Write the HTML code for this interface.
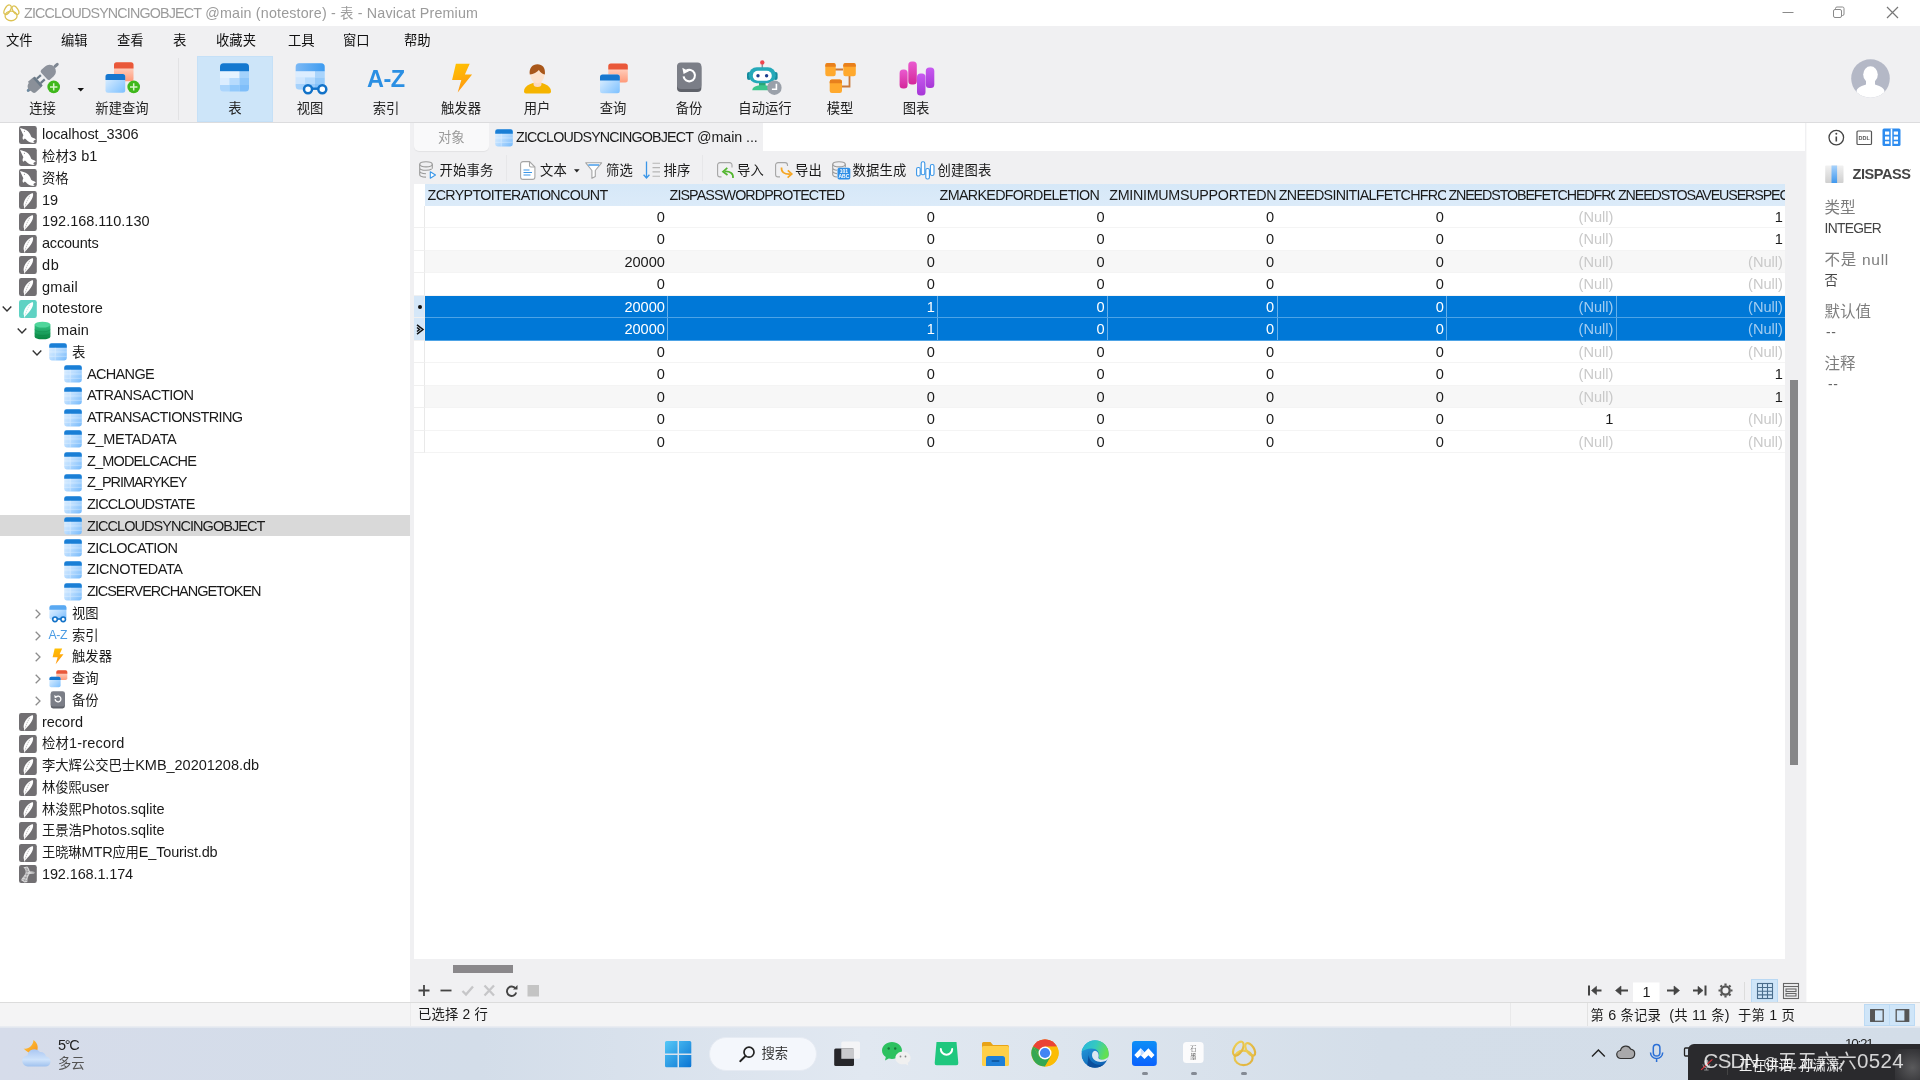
<!DOCTYPE html>
<html lang="zh-CN"><head>
<meta charset="utf-8">
<title>ZICCLOUDSYNCINGOBJECT @main (notestore) - 表 - Navicat Premium</title>
<style>
*{box-sizing:border-box;margin:0;padding:0}
html,body{width:1920px;height:1080px;overflow:hidden;background:#f0f0f2}
body{position:relative;font-family:"Liberation Sans","Noto Sans CJK SC",sans-serif;font-size:14px;color:#1a1a1a;-webkit-font-smoothing:antialiased}
#wrap{position:absolute;left:0;top:0;width:1920px;height:1080px;overflow:hidden;will-change:transform}
.abs{position:absolute}
.t{position:absolute;white-space:nowrap;line-height:20px;height:20px}
svg{position:absolute;overflow:visible}
#titlebar{left:0;top:0;width:1920px;height:26px;background:#fff}
#menubar{left:0;top:26px;width:1920px;height:27px;background:#f0f0f2}
#toolbar{left:0;top:53.500px;width:1920px;height:68.500px;background:#f0f0f2}
#tbline{left:0;top:122px;width:1920px;height:1.300px;background:#dcdcde}
#left{left:0;top:123px;width:410px;height:879px;background:#fff}
#split1{left:410px;top:123px;width:4px;height:879px;background:#f0f0f2}
#main{left:414px;top:123px;width:1391px;height:879px;background:#f0f0f2}
#right{left:1806px;top:123px;width:114px;height:879px;background:linear-gradient(90deg,#f6f6f7 0,#fff 1.500px)}
#status{left:0;top:1002px;width:1920px;height:25px;background:#f4f4f5;border-top:1px solid #dcdcdc}
#taskbar{left:0;top:1027px;width:1920px;height:53px;background:linear-gradient(90deg,#d6dcea 0%,#d3dde9 25%,#e1e8f1 45%,#dde5ee 55%,#d4dee9 72%,#d3dde8 100%)}
.menu .t{top:4.700px;font-size:13.330px;color:#111}
.tbl{position:absolute;top:45.400px;font-size:13.330px;line-height:20px;color:#222;white-space:nowrap;transform:translateX(-50%)}
.row{position:absolute;left:0;width:410px;height:21.75px}
.row .t{top:1.300px;font-size:14.5px;color:#1a1a1a}
.ic{position:absolute}
.c{font-size:13.330px}
.gc{font-size:14.600px;text-align:right;color:#1a1a1a}
</style>
</head>
<body>
<div id="wrap">
<div id="titlebar" class="abs">
  <svg style="left:-2.500px;top:-0.500px" width="26.700" height="26.700" viewBox="0 0 40 40"><g fill="none" stroke="#dcc252" stroke-width="1.900"><ellipse cx="19.600" cy="23.900" rx="9" ry="7.200"></ellipse><ellipse cx="14.300" cy="14.600" rx="4.100" ry="7.800" transform="rotate(31 14.300 14.600)"></ellipse><ellipse cx="26.200" cy="15.400" rx="3.700" ry="7.100" transform="rotate(-33 26.200 15.400)"></ellipse></g></svg>
  <div class="t" id="ttl" style="left:24px;top:3px;font-size:14.300px;color:#9b9b9b"><span style="letter-spacing: -0.83px;">ZICCLOUDSYNCINGOBJECT</span><span style="letter-spacing: 0.17px;"> @main (notestore) - <span class="c">表</span> - Navicat Premium</span></div>
  <svg style="left:1782px;top:6px" width="130" height="14" viewBox="0 0 130 14"><g fill="none" stroke="#8a8a8a" stroke-width="1"><path d="M0.500 6.500H11.500"></path><rect x="51.500" y="3.500" width="8" height="8" rx="1.500"></rect><path d="M53.500 3.500v-1a1.500 1.500 0 0 1 1.500-1.500h5.500a1.500 1.500 0 0 1 1.500 1.500v5.500a1.500 1.500 0 0 1-1.500 1.500h-1"></path><path d="M105 1l11 11M116 1l-11 11" stroke="#777" stroke-width="1.200"></path></g></svg>
</div>
<div id="menubar" class="abs menu">
  <div class="t" style="left:6px">文件</div>
  <div class="t" style="left:61px">编辑</div>
  <div class="t" style="left:117px">查看</div>
  <div class="t" style="left:173px">表</div>
  <div class="t" style="left:216px">收藏夹</div>
  <div class="t" style="left:288px">工具</div>
  <div class="t" style="left:343px">窗口</div>
  <div class="t" style="left:404px">帮助</div>
</div>
<div id="toolbar" class="abs">
  <div class="abs" style="left:197px;top:2px;width:76px;height:66px;background:#cde5f9;border:1px solid #c5e0f7"></div>
  <div class="abs" style="left:178px;top:4px;width:1px;height:62px;background:#e2e2e4"></div>
  <!-- connection -->
  <svg style="left:25px;top:7px" width="38" height="34" viewBox="0 0 38 34">
    <g transform="rotate(-42 17 17)">
      <rect x="-3" y="15.500" width="8" height="3" rx="1.500" fill="#6d8aa0"></rect>
      <path d="M4 10.500h5.500a3 3 0 0 1 3 3v7a3 3 0 0 1-3 3H4a3 3 0 0 1-1-6.500z" fill="#8a9099"></path>
      <path d="M3 12a6 5.500 0 0 0 0 10h7V12z" fill="#8a9099"></path>
      <rect x="10" y="11" width="2.600" height="12" fill="#6b7a88"></rect>
      <rect x="12.600" y="13" width="5.500" height="2.200" fill="#6b7a88"></rect>
      <rect x="12.600" y="18.800" width="5.500" height="2.200" fill="#6b7a88"></rect>
      <path d="M22 10.500h5a6.500 6.500 0 0 1 0 13h-5a2 2 0 0 1-2-2v-9a2 2 0 0 1 2-2z" fill="#8d929c"></path>
      <rect x="33" y="15.500" width="6" height="3" rx="1.500" fill="#7f8793"></rect>
    </g>
    <circle cx="28.700" cy="25.900" r="6.300" fill="#3fb81c"></circle>
    <path d="M25 25.900h7.400M28.700 22.200v7.400" stroke="#d9f5c9" stroke-width="1.500"></path>
  </svg>
  <svg style="left:77px;top:34px" width="8" height="4" viewBox="0 0 8 4"><path d="M0.500 0h6.500L3.750 3.600z" fill="#111"></path></svg>
  <!-- new query -->
  <svg style="left:104px;top:7px" width="38" height="34" viewBox="0 0 38 34">
    <defs>
      <linearGradient id="gRed" x1="0" y1="0" x2="0" y2="1"><stop offset="0" stop-color="#ffe2d6"></stop><stop offset="1" stop-color="#ff9a7a"></stop></linearGradient>
      <linearGradient id="gBlue" x1="0" y1="0" x2="1" y2="1"><stop offset="0" stop-color="#e6f3ff"></stop><stop offset="1" stop-color="#7cc0ff"></stop></linearGradient>
    </defs>
    <rect x="10" y="1.300" width="19.500" height="19" rx="2.500" fill="url(#gRed)"></rect>
    <path d="M10 3.800a2.500 2.500 0 0 1 2.500-2.500h14.500a2.500 2.500 0 0 1 2.500 2.500v3.700H10z" fill="#e9583a"></path>
    <rect x="1.500" y="13" width="19.700" height="18.800" rx="2.500" fill="url(#gBlue)"></rect>
    <path d="M1.500 15.500a2.500 2.500 0 0 1 2.500-2.500h14.700a2.500 2.500 0 0 1 2.500 2.500v3.500H1.500z" fill="#1677cf"></path>
    <circle cx="29.700" cy="25.900" r="6.300" fill="#3fb81c"></circle>
    <path d="M26 25.900h7.400M29.700 22.200v7.400" stroke="#d9f5c9" stroke-width="1.500"></path>
  </svg>
  <!-- table -->
  <svg style="left:220px;top:9px" width="30" height="30" viewBox="0 0 30 30">
    <defs><linearGradient id="gTb" x1="0" y1="0" x2="1" y2="1"><stop offset="0" stop-color="#eaf5ff"></stop><stop offset="0.500" stop-color="#b8dcff"></stop><stop offset="1" stop-color="#74b9fb"></stop></linearGradient>
    <clipPath id="cpT"><rect x="0" y="0.200" width="29" height="28.400" rx="3.500"></rect></clipPath></defs>
    <g clip-path="url(#cpT)">
      <rect x="0" y="0" width="29" height="29" fill="#cfe7fe"></rect>
      <rect x="0" y="8" width="19.500" height="7" fill="#e6f3ff"></rect><rect x="19.500" y="8" width="9.500" height="7" fill="#a3d2fc"></rect>
      <rect x="0" y="15" width="9.500" height="7" fill="#dcedff"></rect><rect x="9.500" y="15" width="10" height="7" fill="#b7dbfd"></rect><rect x="19.500" y="15" width="9.500" height="7" fill="#8fc7fa"></rect>
      <rect x="0" y="22" width="9.500" height="7" fill="#acd5fc"></rect><rect x="9.500" y="22" width="10" height="7" fill="#92c9fb"></rect><rect x="19.500" y="22" width="9.500" height="7" fill="#7fbef9"></rect>
      <rect x="0" y="0" width="29" height="8.200" fill="#1478cf"></rect>
    </g>
  </svg>
  <!-- view -->
  <svg style="left:295px;top:9px" width="34" height="32" viewBox="0 0 34 32">
    <defs><linearGradient id="gVw" x1="0" y1="0" x2="1" y2="0"><stop offset="0" stop-color="#7db9f5"></stop><stop offset="1" stop-color="#3d9bf0"></stop></linearGradient>
    <clipPath id="cpV"><rect x="0.700" y="0.200" width="29" height="26.300" rx="3.500"></rect></clipPath></defs>
    <g clip-path="url(#cpV)">
      <rect x="0" y="0" width="30" height="27" fill="#cfe7fe"></rect>
      <rect x="0" y="8" width="20" height="6.500" fill="#dcedff"></rect><rect x="20" y="8" width="10" height="6.500" fill="#a9d4fc"></rect>
      <rect x="0" y="14.500" width="10" height="6.500" fill="#cfe6fe"></rect><rect x="10" y="14.500" width="10" height="6.500" fill="#b7dbfd"></rect><rect x="20" y="14.500" width="10" height="6.500" fill="#95cafa"></rect>
      <rect x="0" y="21" width="10" height="6" fill="#a6d2fc"></rect><rect x="10" y="21" width="10" height="6" fill="#9ccdfb"></rect><rect x="20" y="21" width="10" height="6" fill="#86c2f9"></rect>
      <rect x="0" y="0" width="30" height="8.200" fill="url(#gVw)"></rect>
    </g>
    <circle cx="13" cy="26.300" r="4" fill="#fff" stroke="#1272c8" stroke-width="2.500"></circle>
    <circle cx="27.300" cy="26.300" r="4" fill="#fff" stroke="#1272c8" stroke-width="2.500"></circle>
    <path d="M17 25.700h6.300" stroke="#1272c8" stroke-width="2.400"></path>
  </svg>
  <!-- index A-Z -->
  <div class="t" id="az" style="left:367px;top:12px;height:26px;line-height:26px;font-size:23.500px;font-weight:bold;color:#2b8fe3;letter-spacing:-0.500px">A-Z</div>
  <!-- trigger -->
  <svg style="left:451px;top:9px" width="22" height="31" viewBox="0 0 22 31">
    <defs><linearGradient id="gLt" x1="0" y1="0" x2="0.300" y2="1"><stop offset="0" stop-color="#ffc400"></stop><stop offset="1" stop-color="#ff9a12"></stop></linearGradient></defs>
    <path d="M4.900 0.800H18.700L13.900 11.600H21.100L6.700 29.500L10.300 17H1.100z" fill="url(#gLt)"></path>
  </svg>
  <!-- user -->
  <svg style="left:523px;top:8px" width="29" height="32" viewBox="0 0 29 32">
    <path d="M1 29.500c0-5.500 6-7.500 9-8.500h9c3 1 9 3 9 8.500a2 2 0 0 1-2 2H3a2 2 0 0 1-2-2z" fill="#f5b400"></path>
    <path d="M10.500 19.500h8v2.500a4 3 0 0 1-8 0z" fill="#fbd9c0"></path>
    <ellipse cx="14.400" cy="13" rx="7" ry="8.300" fill="#fde2cd"></ellipse>
    <path d="M6.800 12.500C5.800 6 9.500 2.200 14.400 2.200c5 0 8.300 3.500 7.500 10.300-2.500-.5-4.600-2-6-4.500-1.700 2.300-5.500 4-9.100 4.500z" fill="#a9571a"></path>
  </svg>
  <!-- query -->
  <svg style="left:599px;top:8px" width="30" height="32" viewBox="0 0 30 32">
    <rect x="9.300" y="1.500" width="19.500" height="19" rx="2.500" fill="url(#gRed)"></rect>
    <path d="M9.300 4a2.500 2.500 0 0 1 2.500-2.500h14.500a2.500 2.500 0 0 1 2.500 2.500v3.500H9.300z" fill="#e9583a"></path>
    <rect x="1" y="12.500" width="19.800" height="18.800" rx="2.500" fill="url(#gBlue)"></rect>
    <path d="M1 15a2.500 2.500 0 0 1 2.500-2.500h14.800a2.500 2.500 0 0 1 2.500 2.500v3.500H1z" fill="#1677cf"></path>
  </svg>
  <!-- backup -->
  <svg style="left:677px;top:8px" width="25" height="31" viewBox="0 0 25 31">
    <rect x="0" y="2" width="24.400" height="28" rx="4" fill="#5f626a"></rect>
    <rect x="0" y="0.400" width="24.400" height="26.500" rx="4" fill="#7b7e87"></rect>
    <path d="M6.600 14.300a5.700 5.700 0 1 0 2.300-5.300" fill="none" stroke="#fff" stroke-width="2.100"></path>
    <path d="M5.300 5.800l1.300 6.200 5.300-2.800z" fill="#fff"></path>
  </svg>
  <!-- automation -->
  <svg style="left:747px;top:5px" width="36" height="38" viewBox="0 0 36 38">
    <path d="M15.300 4v6" stroke="#8a8f98" stroke-width="1.500"></path>
    <circle cx="15.300" cy="3.400" r="2.200" fill="#f0454d"></circle>
    <rect x="0" y="13" width="4" height="8" rx="2" fill="#148a9c"></rect><rect x="26.600" y="13" width="4" height="8" rx="2" fill="#148a9c"></rect>
    <rect x="1.800" y="8.200" width="27" height="16" rx="8" fill="#25a9b9"></rect>
    <rect x="5.800" y="11.700" width="19" height="10" rx="5" fill="#fff"></rect>
    <circle cx="11" cy="16.700" r="1.700" fill="#1d3f8f"></circle><circle cx="19.600" cy="16.700" r="1.700" fill="#1d3f8f"></circle>
    <path d="M12 24h6.600v3H12z" fill="#2aa578"></path>
    <path d="M5.300 31.300c0-3.500 4-5 10-5s10 1.500 10 5z" fill="#3cc68c"></path>
    <circle cx="27.400" cy="28.700" r="7.200" fill="#9aa0a9"></circle>
    <path d="M29.400 24.700v5.500h-4.500" fill="none" stroke="#fff" stroke-width="1.600"></path>
  </svg>
  <!-- model -->
  <svg style="left:824px;top:8px" width="34" height="32" viewBox="0 0 34 32">
    <path d="M11 7.500h8M25.500 14v10.500h-8" fill="none" stroke="#c9793a" stroke-width="1.800"></path>
    <rect x="1.300" y="1" width="10.400" height="13.200" rx="2.200" fill="#ffa92e"></rect><path d="M1.300 3.200a2.200 2.200 0 0 1 2.200-2.200h6a2.200 2.200 0 0 1 2.200 2.200v1.600H1.300z" fill="#e8801d"></path>
    <rect x="19.300" y="1" width="12.500" height="13.200" rx="2.200" fill="#ffa92e"></rect><path d="M19.300 3.200a2.200 2.200 0 0 1 2.200-2.200h8.100a2.200 2.200 0 0 1 2.200 2.200v1.600H19.300z" fill="#e8801d"></path>
    <rect x="5.700" y="17.500" width="12.300" height="13.500" rx="2.200" fill="#ffa92e"></rect><path d="M5.700 19.700a2.200 2.200 0 0 1 2.200-2.200h7.900a2.200 2.200 0 0 1 2.200 2.200v1.600H5.700z" fill="#e8801d"></path>
  </svg>
  <!-- chart -->
  <svg style="left:899px;top:6px" width="36" height="38" viewBox="0 0 36 38">
    <defs>
      <linearGradient id="gP1" x1="0" y1="0" x2="0" y2="1"><stop offset="0" stop-color="#ea5bd0"></stop><stop offset="1" stop-color="#d4279a"></stop></linearGradient>
      <linearGradient id="gP2" x1="0" y1="0" x2="0" y2="1"><stop offset="0" stop-color="#c85af0"></stop><stop offset="1" stop-color="#a637d6"></stop></linearGradient>
    </defs>
    <rect x="0.600" y="9.500" width="8" height="19" rx="3.500" fill="url(#gP1)"></rect>
    <rect x="9.300" y="1.500" width="8.500" height="23" rx="3.500" fill="url(#gP1)"></rect>
    <rect x="18" y="13.500" width="8.500" height="22" rx="3.500" fill="url(#gP2)"></rect>
    <rect x="26.800" y="7.500" width="8.500" height="20.500" rx="3.500" fill="url(#gP2)"></rect>
  </svg>
  <div class="tbl" style="left:42.500px">连接</div>
  <div class="tbl" style="left:122px">新建查询</div>
  <div class="tbl" style="left:235px">表</div>
  <div class="tbl" style="left:310px">视图</div>
  <div class="tbl" style="left:386px">索引</div>
  <div class="tbl" style="left:461px">触发器</div>
  <div class="tbl" style="left:537px">用户</div>
  <div class="tbl" style="left:613px">查询</div>
  <div class="tbl" style="left:689px">备份</div>
  <div class="tbl" style="left:765px">自动运行</div>
  <div class="tbl" style="left:840px">模型</div>
  <div class="tbl" style="left:916px">图表</div>
  <!-- avatar -->
  <svg style="left:1851px;top:5px" width="39" height="39" viewBox="0 0 39 39">
    <defs><clipPath id="cpAv"><circle cx="19.500" cy="19.500" r="19.300"></circle></clipPath></defs>
    <circle cx="19.500" cy="19.500" r="19.300" fill="#b4b8c6"></circle>
    <g clip-path="url(#cpAv)" fill="#fff"><ellipse cx="19.500" cy="15.500" rx="7.300" ry="8.300"></ellipse><path d="M15 21h9v4.500c3.500 1 8.500 2.500 9.500 6.500v8h-28v-8c1-4 6-5.500 9.500-6.500z"></path></g>
  </svg>
</div>
<div id="tbline" class="abs"></div>
<div id="left" class="abs">
<div class="row" style="top:0.10px"><svg style="left:19px;top:2.9px" width="18" height="18" viewBox="0 0 18 18"><rect width="17.800" height="18" rx="2.200" fill="#716f72"></rect><path d="M1 2C2.500 2.200 3.500 2.600 4.400 2.900C5.500 3.200 6.600 3.700 7.500 4.300C8.600 5 9.400 5.700 10 6.550C10.700 7.400 11.100 8.100 11.400 8.800L12.200 10.700C12.800 11.400 13.500 11.800 14.400 12.100C15.300 12.400 16.200 12.800 16.900 13.400C15.800 13.800 14.800 14.400 14.200 15.200C14.700 15.700 15.200 16.200 15.800 16.600C14.800 16.900 13.800 17 12.800 16.800C11.500 16.500 10.300 16 9.400 15.400C8.500 14.700 7.700 14 6.900 13.200L5.800 12.400C5.300 13 4.800 13.500 4.200 13.800C3.700 13.100 3.500 12.400 3.600 11.600C3.700 10.800 4 10 4.400 9.300C3.800 8.300 3.400 7.400 3.050 6.550C2.400 5 1.700 3.500 1 2Z" fill="#fff"></path><circle cx="5.400" cy="5.300" r=".55" fill="#716f72"></circle></svg><div class="t" style="left: 42px; letter-spacing: -0.08px;">localhost_3306</div></div>
<div class="row" style="top:21.85px"><svg style="left:19px;top:2.9px" width="18" height="18" viewBox="0 0 18 18"><rect width="17.800" height="18" rx="2.200" fill="#716f72"></rect><path d="M1 2C2.500 2.200 3.500 2.600 4.400 2.900C5.500 3.200 6.600 3.700 7.500 4.300C8.600 5 9.400 5.700 10 6.550C10.700 7.400 11.100 8.100 11.400 8.800L12.200 10.700C12.800 11.400 13.500 11.800 14.400 12.100C15.300 12.400 16.200 12.800 16.900 13.400C15.800 13.800 14.800 14.400 14.200 15.200C14.700 15.700 15.200 16.200 15.800 16.600C14.800 16.900 13.800 17 12.800 16.800C11.500 16.500 10.300 16 9.400 15.400C8.500 14.700 7.700 14 6.900 13.200L5.800 12.400C5.300 13 4.800 13.500 4.200 13.800C3.700 13.100 3.500 12.400 3.600 11.600C3.700 10.800 4 10 4.400 9.300C3.800 8.300 3.400 7.400 3.050 6.550C2.400 5 1.700 3.500 1 2Z" fill="#fff"></path><circle cx="5.400" cy="5.300" r=".55" fill="#716f72"></circle></svg><div class="t" style="left: 42px; letter-spacing: 0.1px;"><span class="c">检材</span>3 b1</div></div>
<div class="row" style="top:43.60px"><svg style="left:19px;top:2.9px" width="18" height="18" viewBox="0 0 18 18"><rect width="17.800" height="18" rx="2.200" fill="#716f72"></rect><path d="M1 2C2.500 2.200 3.500 2.600 4.400 2.900C5.500 3.200 6.600 3.700 7.500 4.300C8.600 5 9.400 5.700 10 6.550C10.700 7.400 11.100 8.100 11.400 8.800L12.200 10.700C12.800 11.400 13.500 11.800 14.400 12.100C15.300 12.400 16.200 12.800 16.900 13.400C15.800 13.800 14.800 14.400 14.200 15.200C14.700 15.700 15.200 16.200 15.800 16.600C14.800 16.900 13.800 17 12.800 16.800C11.500 16.500 10.300 16 9.400 15.400C8.500 14.700 7.700 14 6.900 13.200L5.800 12.400C5.300 13 4.800 13.500 4.200 13.800C3.700 13.100 3.500 12.400 3.600 11.600C3.700 10.800 4 10 4.400 9.300C3.800 8.300 3.400 7.400 3.050 6.550C2.400 5 1.700 3.500 1 2Z" fill="#fff"></path><circle cx="5.400" cy="5.300" r=".55" fill="#716f72"></circle></svg><div class="t" style="left: 42px; letter-spacing: -0.08px;"><span class="c">资格</span></div></div>
<div class="row" style="top:65.35px"><svg style="left:19px;top:2.9px" width="18" height="18" viewBox="0 0 18 18"><rect width="17.800" height="18" rx="2.200" fill="#716f72"></rect><path d="M14 2.200C12.600 1.900 10.300 3.200 8 5.800C6 8.200 4.700 11 4.600 13.300C4.600 14.200 4.700 14.900 5 15.400L5.300 17.600L6.200 17.600L6.100 16.300C6.900 15.700 7.600 14.800 8.300 13.900C9.700 12.500 11.100 11 12 9.500C13.400 7.400 14.600 4.500 14 2.200Z" fill="#fff"></path><path d="M10.800 4.800C9 7.500 7.200 11.500 6 15.500" stroke="#716f72" stroke-width=".7" fill="none" opacity=".6" stroke-dasharray="1.600 .7"></path></svg><div class="t" style="left: 42px; letter-spacing: -0.07px;">19</div></div>
<div class="row" style="top:87.10px"><svg style="left:19px;top:2.9px" width="18" height="18" viewBox="0 0 18 18"><rect width="17.800" height="18" rx="2.200" fill="#716f72"></rect><path d="M14 2.200C12.600 1.900 10.300 3.200 8 5.800C6 8.200 4.700 11 4.600 13.300C4.600 14.200 4.700 14.900 5 15.400L5.300 17.600L6.200 17.600L6.100 16.300C6.900 15.700 7.600 14.800 8.300 13.900C9.700 12.500 11.100 11 12 9.500C13.400 7.400 14.600 4.500 14 2.200Z" fill="#fff"></path><path d="M10.800 4.800C9 7.500 7.200 11.500 6 15.500" stroke="#716f72" stroke-width=".7" fill="none" opacity=".6" stroke-dasharray="1.600 .7"></path></svg><div class="t" style="left: 42px; letter-spacing: -0.02px;">192.168.110.130</div></div>
<div class="row" style="top:108.85px"><svg style="left:19px;top:2.9px" width="18" height="18" viewBox="0 0 18 18"><rect width="17.800" height="18" rx="2.200" fill="#716f72"></rect><path d="M14 2.200C12.600 1.900 10.300 3.200 8 5.800C6 8.200 4.700 11 4.600 13.300C4.600 14.200 4.700 14.900 5 15.400L5.300 17.600L6.200 17.600L6.100 16.300C6.900 15.700 7.600 14.800 8.300 13.900C9.700 12.500 11.100 11 12 9.500C13.400 7.400 14.600 4.500 14 2.200Z" fill="#fff"></path><path d="M10.800 4.800C9 7.500 7.200 11.500 6 15.500" stroke="#716f72" stroke-width=".7" fill="none" opacity=".6" stroke-dasharray="1.600 .7"></path></svg><div class="t" style="left: 42px; letter-spacing: -0.19px;">accounts</div></div>
<div class="row" style="top:130.60px"><svg style="left:19px;top:2.9px" width="18" height="18" viewBox="0 0 18 18"><rect width="17.800" height="18" rx="2.200" fill="#716f72"></rect><path d="M14 2.200C12.600 1.900 10.300 3.200 8 5.800C6 8.200 4.700 11 4.600 13.300C4.600 14.200 4.700 14.900 5 15.400L5.300 17.600L6.200 17.600L6.100 16.300C6.900 15.700 7.600 14.800 8.300 13.900C9.700 12.500 11.100 11 12 9.500C13.400 7.400 14.600 4.500 14 2.200Z" fill="#fff"></path><path d="M10.800 4.800C9 7.500 7.200 11.500 6 15.500" stroke="#716f72" stroke-width=".7" fill="none" opacity=".6" stroke-dasharray="1.600 .7"></path></svg><div class="t" style="left: 42px; letter-spacing: 0.68px;">db</div></div>
<div class="row" style="top:152.35px"><svg style="left:19px;top:2.9px" width="18" height="18" viewBox="0 0 18 18"><rect width="17.800" height="18" rx="2.200" fill="#716f72"></rect><path d="M14 2.200C12.600 1.900 10.300 3.200 8 5.800C6 8.200 4.700 11 4.600 13.300C4.600 14.200 4.700 14.900 5 15.400L5.300 17.600L6.200 17.600L6.100 16.300C6.900 15.700 7.600 14.800 8.300 13.900C9.700 12.500 11.100 11 12 9.500C13.400 7.400 14.600 4.500 14 2.200Z" fill="#fff"></path><path d="M10.800 4.800C9 7.500 7.200 11.500 6 15.500" stroke="#716f72" stroke-width=".7" fill="none" opacity=".6" stroke-dasharray="1.600 .7"></path></svg><div class="t" style="left: 42px; letter-spacing: 0.27px;">gmail</div></div>
<div class="row" style="top:174.10px"><svg style="left:1.9000000000000004px;top:9.100px" width="10" height="6" viewBox="0 0 10 6"><path d="M.7.600L5 4.900 9.300.6" fill="none" stroke="#333" stroke-width="1.400"></path></svg><svg style="left:19px;top:2.9px" width="18" height="18" viewBox="0 0 18 18"><rect width="17.800" height="18" rx="2.200" fill="#5fd2c3"></rect><path d="M14 2.200C12.600 1.900 10.300 3.200 8 5.800C6 8.200 4.700 11 4.600 13.300C4.600 14.200 4.700 14.900 5 15.400L5.300 17.600L6.200 17.600L6.100 16.300C6.900 15.700 7.600 14.800 8.300 13.900C9.700 12.500 11.100 11 12 9.500C13.400 7.400 14.600 4.500 14 2.200Z" fill="#fff"></path><path d="M10.800 4.800C9 7.500 7.200 11.500 6 15.500" stroke="#5fd2c3" stroke-width=".7" fill="none" opacity=".6" stroke-dasharray="1.600 .7"></path></svg><div class="t" style="left: 42px; letter-spacing: 0.06px;">notestore</div></div>
<div class="row" style="top:195.85px"><svg style="left:16.9px;top:9.100px" width="10" height="6" viewBox="0 0 10 6"><path d="M.7.600L5 4.900 9.300.6" fill="none" stroke="#333" stroke-width="1.400"></path></svg><svg style="left:34px;top:2.600px" width="17" height="19" viewBox="0 0 17 19"><defs><linearGradient id="gCy" x1="0" y1="0" x2="0" y2="1"><stop offset="0" stop-color="#35c585"></stop><stop offset="1" stop-color="#07843f"></stop></linearGradient></defs><path d="M.6 3.600v11.800c0 1.700 3.500 2.900 7.900 2.900s7.900-1.200 7.900-2.900V3.600z" fill="url(#gCy)"></path><ellipse cx="8.500" cy="3.600" rx="7.900" ry="2.900" fill="#4fd69b"></ellipse><path d="M.6 8.500c1 1.500 4 2.300 7.900 2.300s6.900-.8 7.900-2.300M.6 12.300c1 1.500 4 2.300 7.900 2.300s6.900-.8 7.900-2.300" fill="none" stroke="#0a7a3c" stroke-width=".6" opacity=".55"></path></svg><div class="t" style="left: 57px; letter-spacing: 0.14px;">main</div></div>
<div class="row" style="top:217.60px"><svg style="left:31.9px;top:9.100px" width="10" height="6" viewBox="0 0 10 6"><path d="M.7.600L5 4.900 9.300.6" fill="none" stroke="#333" stroke-width="1.400"></path></svg><svg style="left:49px;top:2.900px" width="18" height="18" viewBox="0 0 18 18"><rect x=".2" y=".2" width="17.600" height="17.300" rx="2.400" fill="url(#gTb)"></rect><path d="M.2 2.600A2.400 2.400 0 0 1 2.600.2h12.800a2.400 2.400 0 0 1 2.400 2.400v2.100H.2z" fill="#1a7fd6"></path><path d="M6.200 4.700v12.800M.2 9h17.600M.2 13.300h17.600" stroke="#fff" stroke-width=".7" opacity=".45"></path></svg><div class="t" style="left: 72px; letter-spacing: 0.17px;"><span class="c">表</span></div></div>
<div class="row" style="top:239.35px"><svg style="left:64px;top:2.900px" width="18" height="18" viewBox="0 0 18 18"><rect x=".2" y=".2" width="17.600" height="17.300" rx="2.400" fill="url(#gTb)"></rect><path d="M.2 2.600A2.400 2.400 0 0 1 2.600.2h12.800a2.400 2.400 0 0 1 2.400 2.400v2.100H.2z" fill="#1a7fd6"></path><path d="M6.200 4.700v12.800M.2 9h17.600M.2 13.300h17.600" stroke="#fff" stroke-width=".7" opacity=".45"></path></svg><div class="t" style="left: 87px; letter-spacing: -0.67px;">ACHANGE</div></div>
<div class="row" style="top:261.10px"><svg style="left:64px;top:2.900px" width="18" height="18" viewBox="0 0 18 18"><rect x=".2" y=".2" width="17.600" height="17.300" rx="2.400" fill="url(#gTb)"></rect><path d="M.2 2.600A2.400 2.400 0 0 1 2.600.2h12.800a2.400 2.400 0 0 1 2.400 2.400v2.100H.2z" fill="#1a7fd6"></path><path d="M6.200 4.700v12.800M.2 9h17.600M.2 13.300h17.600" stroke="#fff" stroke-width=".7" opacity=".45"></path></svg><div class="t" style="left: 87px; letter-spacing: -0.5px;">ATRANSACTION</div></div>
<div class="row" style="top:282.85px"><svg style="left:64px;top:2.900px" width="18" height="18" viewBox="0 0 18 18"><rect x=".2" y=".2" width="17.600" height="17.300" rx="2.400" fill="url(#gTb)"></rect><path d="M.2 2.600A2.400 2.400 0 0 1 2.600.2h12.800a2.400 2.400 0 0 1 2.400 2.400v2.100H.2z" fill="#1a7fd6"></path><path d="M6.200 4.700v12.800M.2 9h17.600M.2 13.300h17.600" stroke="#fff" stroke-width=".7" opacity=".45"></path></svg><div class="t" style="left: 87px; letter-spacing: -0.66px;">ATRANSACTIONSTRING</div></div>
<div class="row" style="top:304.60px"><svg style="left:64px;top:2.900px" width="18" height="18" viewBox="0 0 18 18"><rect x=".2" y=".2" width="17.600" height="17.300" rx="2.400" fill="url(#gTb)"></rect><path d="M.2 2.600A2.400 2.400 0 0 1 2.600.2h12.800a2.400 2.400 0 0 1 2.400 2.400v2.100H.2z" fill="#1a7fd6"></path><path d="M6.200 4.700v12.800M.2 9h17.600M.2 13.300h17.600" stroke="#fff" stroke-width=".7" opacity=".45"></path></svg><div class="t" style="left: 87px; letter-spacing: -0.32px;">Z_METADATA</div></div>
<div class="row" style="top:326.35px"><svg style="left:64px;top:2.900px" width="18" height="18" viewBox="0 0 18 18"><rect x=".2" y=".2" width="17.600" height="17.300" rx="2.400" fill="url(#gTb)"></rect><path d="M.2 2.600A2.400 2.400 0 0 1 2.600.2h12.800a2.400 2.400 0 0 1 2.400 2.400v2.100H.2z" fill="#1a7fd6"></path><path d="M6.200 4.700v12.800M.2 9h17.600M.2 13.300h17.600" stroke="#fff" stroke-width=".7" opacity=".45"></path></svg><div class="t" style="left: 87px; letter-spacing: -0.85px;">Z_MODELCACHE</div></div>
<div class="row" style="top:348.10px"><svg style="left:64px;top:2.900px" width="18" height="18" viewBox="0 0 18 18"><rect x=".2" y=".2" width="17.600" height="17.300" rx="2.400" fill="url(#gTb)"></rect><path d="M.2 2.600A2.400 2.400 0 0 1 2.600.2h12.800a2.400 2.400 0 0 1 2.400 2.400v2.100H.2z" fill="#1a7fd6"></path><path d="M6.200 4.700v12.800M.2 9h17.600M.2 13.300h17.600" stroke="#fff" stroke-width=".7" opacity=".45"></path></svg><div class="t" style="left: 87px; letter-spacing: -1.02px;">Z_PRIMARYKEY</div></div>
<div class="row" style="top:369.85px"><svg style="left:64px;top:2.900px" width="18" height="18" viewBox="0 0 18 18"><rect x=".2" y=".2" width="17.600" height="17.300" rx="2.400" fill="url(#gTb)"></rect><path d="M.2 2.600A2.400 2.400 0 0 1 2.600.2h12.800a2.400 2.400 0 0 1 2.400 2.400v2.100H.2z" fill="#1a7fd6"></path><path d="M6.200 4.700v12.800M.2 9h17.600M.2 13.300h17.600" stroke="#fff" stroke-width=".7" opacity=".45"></path></svg><div class="t" style="left: 87px; letter-spacing: -0.86px;">ZICCLOUDSTATE</div></div>
<div class="row" style="top:391.60px;background:#d9d9d9"><svg style="left:64px;top:2.900px" width="18" height="18" viewBox="0 0 18 18"><rect x=".2" y=".2" width="17.600" height="17.300" rx="2.400" fill="url(#gTb)"></rect><path d="M.2 2.600A2.400 2.400 0 0 1 2.600.2h12.800a2.400 2.400 0 0 1 2.400 2.400v2.100H.2z" fill="#1a7fd6"></path><path d="M6.200 4.700v12.800M.2 9h17.600M.2 13.300h17.600" stroke="#fff" stroke-width=".7" opacity=".45"></path></svg><div class="t" style="left: 87px; letter-spacing: -0.95px;">ZICCLOUDSYNCINGOBJECT</div></div>
<div class="row" style="top:413.35px"><svg style="left:64px;top:2.900px" width="18" height="18" viewBox="0 0 18 18"><rect x=".2" y=".2" width="17.600" height="17.300" rx="2.400" fill="url(#gTb)"></rect><path d="M.2 2.600A2.400 2.400 0 0 1 2.600.2h12.800a2.400 2.400 0 0 1 2.400 2.400v2.100H.2z" fill="#1a7fd6"></path><path d="M6.200 4.700v12.800M.2 9h17.600M.2 13.300h17.600" stroke="#fff" stroke-width=".7" opacity=".45"></path></svg><div class="t" style="left: 87px; letter-spacing: -0.54px;">ZICLOCATION</div></div>
<div class="row" style="top:435.10px"><svg style="left:64px;top:2.900px" width="18" height="18" viewBox="0 0 18 18"><rect x=".2" y=".2" width="17.600" height="17.300" rx="2.400" fill="url(#gTb)"></rect><path d="M.2 2.600A2.400 2.400 0 0 1 2.600.2h12.800a2.400 2.400 0 0 1 2.400 2.400v2.100H.2z" fill="#1a7fd6"></path><path d="M6.200 4.700v12.800M.2 9h17.600M.2 13.300h17.600" stroke="#fff" stroke-width=".7" opacity=".45"></path></svg><div class="t" style="left: 87px; letter-spacing: -0.42px;">ZICNOTEDATA</div></div>
<div class="row" style="top:456.85px"><svg style="left:64px;top:2.900px" width="18" height="18" viewBox="0 0 18 18"><rect x=".2" y=".2" width="17.600" height="17.300" rx="2.400" fill="url(#gTb)"></rect><path d="M.2 2.600A2.400 2.400 0 0 1 2.600.2h12.800a2.400 2.400 0 0 1 2.400 2.400v2.100H.2z" fill="#1a7fd6"></path><path d="M6.200 4.700v12.800M.2 9h17.600M.2 13.300h17.600" stroke="#fff" stroke-width=".7" opacity=".45"></path></svg><div class="t" style="left: 87px; letter-spacing: -1.05px;">ZICSERVERCHANGETOKEN</div></div>
<div class="row" style="top:478.60px"><svg style="left:34.5px;top:7.200px" width="6" height="10" viewBox="0 0 6 10"><path d="M.7.700L5 5 .7 9.300" fill="none" stroke="#8c8c8c" stroke-width="1.300"></path></svg><svg style="left:49px;top:3.500px" width="19" height="18" viewBox="0 0 19 18"><rect x=".4" y=".2" width="17" height="14.500" rx="2.400" fill="url(#gTb)"></rect><path d="M.4 2.600A2.400 2.400 0 0 1 2.800.2h12.200a2.400 2.400 0 0 1 2.400 2.400v2.100H.4z" fill="#5aa9f2"></path><circle cx="6" cy="14.300" r="2.300" fill="#fff" stroke="#1272c8" stroke-width="1.600"></circle><circle cx="14.200" cy="14.300" r="2.300" fill="#fff" stroke="#1272c8" stroke-width="1.600"></circle><path d="M8.300 14h3.600" stroke="#1272c8" stroke-width="1.600"></path></svg><div class="t" style="left: 72px; letter-spacing: -0.08px;"><span class="c">视图</span></div></div>
<div class="row" style="top:500.35px"><svg style="left:34.5px;top:7.200px" width="6" height="10" viewBox="0 0 6 10"><path d="M.7.700L5 5 .7 9.300" fill="none" stroke="#8c8c8c" stroke-width="1.300"></path></svg><div class="t" style="left: 48.5px; top: 2px; font-size: 12.3px; color: rgb(74, 155, 227); letter-spacing: -0.44px;">A-Z</div><div class="t" style="left: 72px; letter-spacing: -0.08px;"><span class="c">索引</span></div></div>
<div class="row" style="top:522.10px"><svg style="left:34.5px;top:7.200px" width="6" height="10" viewBox="0 0 6 10"><path d="M.7.700L5 5 .7 9.300" fill="none" stroke="#8c8c8c" stroke-width="1.300"></path></svg><svg style="left:52px;top:2.500px" width="12" height="17" viewBox="0 0 22 31"><path d="M4.900 0.800H18.700L13.900 11.600H21.100L6.700 29.500L10.300 17H1.100z" fill="url(#gLt)"></path></svg><div class="t" style="left: 72px; letter-spacing: 0.01px;"><span class="c">触发器</span></div></div>
<div class="row" style="top:543.85px"><svg style="left:34.5px;top:7.200px" width="6" height="10" viewBox="0 0 6 10"><path d="M.7.700L5 5 .7 9.300" fill="none" stroke="#8c8c8c" stroke-width="1.300"></path></svg><svg style="left:48.500px;top:3.500px" width="19" height="18" viewBox="0 0 19 18"><rect x="7.300" y=".3" width="11" height="9.800" rx="1.800" fill="url(#gRed)"></rect><path d="M7.300 2.100A1.800 1.800 0 0 1 9.100.3h7.400a1.800 1.800 0 0 1 1.800 1.800v1.700H7.300z" fill="#e9583a"></path><rect x=".4" y="6.700" width="11.200" height="10.600" rx="1.800" fill="url(#gBlue)"></rect><path d="M.4 8.500a1.800 1.800 0 0 1 1.800-1.800h7.600a1.800 1.800 0 0 1 1.800 1.800v1.500H.4z" fill="#1677cf"></path></svg><div class="t" style="left: 72px; letter-spacing: -0.08px;"><span class="c">查询</span></div></div>
<div class="row" style="top:565.60px"><svg style="left:34.5px;top:7.200px" width="6" height="10" viewBox="0 0 6 10"><path d="M.7.700L5 5 .7 9.300" fill="none" stroke="#8c8c8c" stroke-width="1.300"></path></svg><svg style="left:50px;top:2.700px" width="16" height="18" viewBox="0 0 25 31"><rect x="0" y="2" width="24.400" height="28" rx="4" fill="#5f626a"></rect><rect x="0" y="0.400" width="24.400" height="26.500" rx="4" fill="#7b7e87"></rect><path d="M7.500 14a5 5 0 1 0 2-4.300" fill="none" stroke="#fff" stroke-width="2.200"></path><path d="M6 7l1 5.500 5-2z" fill="#fff"></path></svg><div class="t" style="left: 72px; letter-spacing: -0.08px;"><span class="c">备份</span></div></div>
<div class="row" style="top:587.35px"><svg style="left:19px;top:2.9px" width="18" height="18" viewBox="0 0 18 18"><rect width="17.800" height="18" rx="2.200" fill="#716f72"></rect><path d="M14 2.200C12.600 1.900 10.300 3.200 8 5.800C6 8.200 4.700 11 4.600 13.300C4.600 14.200 4.700 14.900 5 15.400L5.300 17.600L6.200 17.600L6.100 16.300C6.900 15.700 7.600 14.800 8.300 13.900C9.700 12.500 11.100 11 12 9.500C13.400 7.400 14.600 4.500 14 2.200Z" fill="#fff"></path><path d="M10.800 4.800C9 7.500 7.200 11.500 6 15.500" stroke="#716f72" stroke-width=".7" fill="none" opacity=".6" stroke-dasharray="1.600 .7"></path></svg><div class="t" style="left: 42px; letter-spacing: -0.02px;">record</div></div>
<div class="row" style="top:609.10px"><svg style="left:19px;top:2.9px" width="18" height="18" viewBox="0 0 18 18"><rect width="17.800" height="18" rx="2.200" fill="#716f72"></rect><path d="M14 2.200C12.600 1.900 10.300 3.200 8 5.800C6 8.200 4.700 11 4.600 13.300C4.600 14.200 4.700 14.900 5 15.400L5.300 17.600L6.200 17.600L6.100 16.300C6.900 15.700 7.600 14.800 8.300 13.900C9.700 12.500 11.100 11 12 9.500C13.400 7.400 14.600 4.500 14 2.200Z" fill="#fff"></path><path d="M10.800 4.800C9 7.500 7.200 11.500 6 15.500" stroke="#716f72" stroke-width=".7" fill="none" opacity=".6" stroke-dasharray="1.600 .7"></path></svg><div class="t" style="left: 42px; letter-spacing: 0.18px;"><span class="c">检材</span>1-record</div></div>
<div class="row" style="top:630.85px"><svg style="left:19px;top:2.9px" width="18" height="18" viewBox="0 0 18 18"><rect width="17.800" height="18" rx="2.200" fill="#716f72"></rect><path d="M14 2.200C12.600 1.900 10.300 3.200 8 5.800C6 8.200 4.700 11 4.600 13.300C4.600 14.200 4.700 14.900 5 15.400L5.300 17.600L6.200 17.600L6.100 16.300C6.900 15.700 7.600 14.800 8.300 13.900C9.700 12.500 11.100 11 12 9.500C13.400 7.400 14.600 4.500 14 2.200Z" fill="#fff"></path><path d="M10.800 4.800C9 7.500 7.200 11.500 6 15.500" stroke="#716f72" stroke-width=".7" fill="none" opacity=".6" stroke-dasharray="1.600 .7"></path></svg><div class="t" style="left: 42px; letter-spacing: -0.02px;"><span class="c">李大辉公交巴士</span>KMB_20201208.db</div></div>
<div class="row" style="top:652.60px"><svg style="left:19px;top:2.9px" width="18" height="18" viewBox="0 0 18 18"><rect width="17.800" height="18" rx="2.200" fill="#716f72"></rect><path d="M14 2.200C12.600 1.900 10.300 3.200 8 5.800C6 8.200 4.700 11 4.600 13.300C4.600 14.200 4.700 14.900 5 15.400L5.300 17.600L6.200 17.600L6.100 16.300C6.900 15.700 7.600 14.800 8.300 13.900C9.700 12.500 11.100 11 12 9.500C13.400 7.400 14.600 4.500 14 2.200Z" fill="#fff"></path><path d="M10.800 4.800C9 7.500 7.200 11.500 6 15.500" stroke="#716f72" stroke-width=".7" fill="none" opacity=".6" stroke-dasharray="1.600 .7"></path></svg><div class="t" style="left: 42px; letter-spacing: -0.17px;"><span class="c">林俊熙</span>user</div></div>
<div class="row" style="top:674.35px"><svg style="left:19px;top:2.9px" width="18" height="18" viewBox="0 0 18 18"><rect width="17.800" height="18" rx="2.200" fill="#716f72"></rect><path d="M14 2.200C12.600 1.900 10.300 3.200 8 5.800C6 8.200 4.700 11 4.600 13.300C4.600 14.200 4.700 14.900 5 15.400L5.300 17.600L6.200 17.600L6.100 16.300C6.900 15.700 7.600 14.800 8.300 13.900C9.700 12.500 11.100 11 12 9.500C13.400 7.400 14.600 4.500 14 2.200Z" fill="#fff"></path><path d="M10.800 4.800C9 7.500 7.200 11.500 6 15.500" stroke="#716f72" stroke-width=".7" fill="none" opacity=".6" stroke-dasharray="1.600 .7"></path></svg><div class="t" style="left: 42px; letter-spacing: -0.03px;"><span class="c">林浚熙</span>Photos.sqlite</div></div>
<div class="row" style="top:696.10px"><svg style="left:19px;top:2.9px" width="18" height="18" viewBox="0 0 18 18"><rect width="17.800" height="18" rx="2.200" fill="#716f72"></rect><path d="M14 2.200C12.600 1.900 10.300 3.200 8 5.800C6 8.200 4.700 11 4.600 13.300C4.600 14.200 4.700 14.900 5 15.400L5.300 17.600L6.200 17.600L6.100 16.300C6.900 15.700 7.600 14.800 8.300 13.900C9.700 12.500 11.100 11 12 9.500C13.400 7.400 14.600 4.500 14 2.200Z" fill="#fff"></path><path d="M10.800 4.800C9 7.500 7.200 11.500 6 15.500" stroke="#716f72" stroke-width=".7" fill="none" opacity=".6" stroke-dasharray="1.600 .7"></path></svg><div class="t" style="left: 42px; letter-spacing: -0.03px;"><span class="c">王景浩</span>Photos.sqlite</div></div>
<div class="row" style="top:717.85px"><svg style="left:19px;top:2.9px" width="18" height="18" viewBox="0 0 18 18"><rect width="17.800" height="18" rx="2.200" fill="#716f72"></rect><path d="M14 2.200C12.600 1.900 10.300 3.200 8 5.800C6 8.200 4.700 11 4.600 13.300C4.600 14.200 4.700 14.900 5 15.400L5.300 17.600L6.200 17.600L6.100 16.300C6.900 15.700 7.600 14.800 8.300 13.900C9.700 12.500 11.100 11 12 9.500C13.400 7.400 14.600 4.500 14 2.200Z" fill="#fff"></path><path d="M10.800 4.800C9 7.500 7.200 11.500 6 15.500" stroke="#716f72" stroke-width=".7" fill="none" opacity=".6" stroke-dasharray="1.600 .7"></path></svg><div class="t" style="left: 42px; letter-spacing: -0.16px;"><span class="c">王晓琳</span>MTR<span class="c">应用</span>E_Tourist.db</div></div>
<div class="row" style="top:739.60px"><svg style="left:19px;top:2.9px" width="18" height="18" viewBox="0 0 18 18"><rect width="17.800" height="18" rx="2.200" fill="#716f72"></rect><path d="M4.400 2.200L8.300 1.600C9.600 2.800 10.300 4.200 10.500 5.800L15.500 6.900L15.300 8.600L10.500 9.100C10.200 10 9.700 10.700 9.200 11.400C8.500 13.200 8.200 15 8.300 16.900L5.500 17.500L2.200 15.300C2.500 13.800 3.300 12.600 4.400 11.400C5.500 10.200 6.300 8.800 6.700 7.200C6.700 5.300 5.900 3.700 4.400 2.200Z" fill="#fff" opacity=".72"></path><path d="M5.500 3.500l3.500 1M6.500 6l3.500.5M6 9l3.500 .8M4.500 12l4 1M3.500 14.500l4.500 1.200M7.500 2.500c1.500 4 .5 8-2.500 14M11 6.500l4 1" stroke="#716f72" stroke-width=".6" fill="none" opacity=".7"></path></svg><div class="t" style="left: 42px; letter-spacing: -0.13px;">192.168.1.174</div></div>
</div>
<div id="split1" class="abs"></div>
<div id="main" class="abs">
<div class="abs" style="left:0;top:0;width:1391px;height:28px;background:#fff"></div>
<div class="abs" style="left:0;top:0;width:75px;height:28px;background:#f0f0f2"></div>
<div class="abs" style="left:0;top:0;width:75px;height:27.500px;background:#f9f9fa;border-radius:0 0 5px 5px;box-shadow:0 .5px 1px rgba(0,0,0,.06)"></div>
<div class="t" style="left:24px;top:5px;font-size:13.330px;color:#9a9a9a">对象</div>
<div class="abs" style="left:75px;top:0;width:274px;height:29px;background:#f0f0f2"></div>
<svg style="left:80.500px;top:6px" width="18" height="18" viewBox="0 0 18 18"><rect x=".2" y=".2" width="17.600" height="17.300" rx="2.400" fill="url(#gTb)"></rect><path d="M.2 2.600A2.400 2.400 0 0 1 2.600.2h12.800a2.400 2.400 0 0 1 2.400 2.400v2.100H.2z" fill="#1a7fd6"></path><path d="M6.200 4.700v12.800M.2 9h17.600M.2 13.300h17.600" stroke="#fff" stroke-width=".7" opacity=".45"></path></svg>
<div class="t" style="left:102px;top:4px;font-size:14.300px;color:#1a1a1a"><span style="letter-spacing: -0.83px;">ZICCLOUDSYNCINGOBJECT</span><span style="letter-spacing: -0.09px;"> @main ...</span></div>
<div class="t" style="left: 25.5px; top: 38px; font-size: 13.33px; color: rgb(26, 26, 26); letter-spacing: 0.17px;">开始事务</div>
<div class="t" style="left: 126px; top: 38px; font-size: 13.33px; color: rgb(26, 26, 26); letter-spacing: 0.17px;">文本</div>
<div class="t" style="left: 192px; top: 38px; font-size: 13.33px; color: rgb(26, 26, 26); letter-spacing: 0.17px;">筛选</div>
<div class="t" style="left: 249.5px; top: 38px; font-size: 13.33px; color: rgb(26, 26, 26); letter-spacing: 0.17px;">排序</div>
<div class="t" style="left: 323px; top: 38px; font-size: 13.33px; color: rgb(26, 26, 26); letter-spacing: 0.17px;">导入</div>
<div class="t" style="left: 381px; top: 38px; font-size: 13.33px; color: rgb(26, 26, 26); letter-spacing: 0.17px;">导出</div>
<div class="t" style="left: 438.5px; top: 38px; font-size: 13.33px; color: rgb(26, 26, 26); letter-spacing: 0.17px;">数据生成</div>
<div class="t" style="left: 523.5px; top: 38px; font-size: 13.33px; color: rgb(26, 26, 26); letter-spacing: 0.17px;">创建图表</div>
<div class="abs" style="left:92px;top:32px;width:1px;height:26px;background:#e7e7e9"></div>
<div class="abs" style="left:288px;top:32px;width:1px;height:26px;background:#e7e7e9"></div>
<svg style="left:5.0px;top:38.0px" width="18" height="18" viewBox="0 0 18 18"><g fill="none" stroke="#9a9a9a" stroke-width="1.100"><ellipse cx="7" cy="3.300" rx="6.300" ry="2.600"></ellipse><path d="M.7 3.300v10.200c0 1.500 2.800 2.600 6.300 2.600M13.300 3.300v4.500M.7 6.700c0 1.500 2.800 2.600 6.300 2.600 2.500 0 4.500-.5 5.600-1.300M.7 10.100c0 1.500 2.800 2.600 6.300 2.600"></path></g><path d="M11.300 10.800l5.200 3.200-5.200 3.200z" fill="#fff" stroke="#3a96e8" stroke-width="1.100" stroke-linejoin="round"></path></svg>
<svg style="left:106.0px;top:37.5px" width="16" height="19" viewBox="0 0 16 19"><path d="M3 .6h6.500l5.400 5.400v10a2.400 2.400 0 0 1-2.400 2.400H3a2.400 2.400 0 0 1-2.400-2.400V3A2.400 2.400 0 0 1 3 .6z" fill="#fff" stroke="#a5a5a5" stroke-width="1.100"></path><path d="M9.500.8v3.700a1.500 1.500 0 0 0 1.500 1.500h3.700" fill="none" stroke="#a5a5a5" stroke-width="1.100"></path><path d="M3.500 9h6M3.500 11.500h8.500M3.500 14h7" stroke="#3a96e8" stroke-width="1.200"></path></svg>
<svg style="left:159.5px;top:46.0px" width="6" height="4" viewBox="0 0 6 4"><path d="M0 .3h5.600L2.800 3.500z" fill="#222"></path></svg>
<svg style="left:171.0px;top:39.0px" width="18" height="17" viewBox="0 0 18 17"><path d="M.8.800h15.800L10.300 8.500v6L6.900 16.300V8.500z" fill="#fff" stroke="#a5a5a5" stroke-width="1.100" stroke-linejoin="round"></path><path d="M3.300 3h10.800" stroke="#3a96e8" stroke-width="1.400"></path></svg>
<svg style="left:229.0px;top:38.0px" width="18" height="19" viewBox="0 0 18 19"><path d="M3.500.5v16.500M.6 13.800l2.900 3.200 2.900-3.200" fill="none" stroke="#3a96e8" stroke-width="1.300"></path><path d="M9.500 2.300h7.500M9.500 6.600h7.500M9.500 10.900h7.500M9.500 15.200h7.500" stroke="#b5b5b5" stroke-width="1.100"></path></svg>
<svg style="left:303.0px;top:39.0px" width="18" height="17" viewBox="0 0 18 17"><path d="M15 5.500V3A2.400 2.400 0 0 0 12.600.6H3A2.400 2.400 0 0 0 .6 3v9.500A2.400 2.400 0 0 0 3 14.900h1.500" fill="none" stroke="#a5a5a5" stroke-width="1.100"></path><path d="M16 16c.5-4.500-2.500-6.800-8.500-6.500" fill="none" stroke="#52b52e" stroke-width="1.700"></path><path d="M10.300 5.800L6 9.600l4.500 3.400" fill="none" stroke="#52b52e" stroke-width="1.700"></path></svg>
<svg style="left:360.5px;top:39.0px" width="18" height="17" viewBox="0 0 18 17"><path d="M12.500 4V3A2.400 2.400 0 0 0 10.100.6H3A2.400 2.400 0 0 0 .6 3v9.500A2.400 2.400 0 0 0 3 14.900h2" fill="none" stroke="#a5a5a5" stroke-width="1.100"></path><path d="M6.500 5.500c-.3 4.500 2.500 7 9 6.500" fill="none" stroke="#f5a623" stroke-width="1.700"></path><path d="M12.800 8.300l4 3.700-4.200 3.600" fill="none" stroke="#f5a623" stroke-width="1.700"></path></svg>
<svg style="left:418.0px;top:37.5px" width="19" height="19" viewBox="0 0 19 19"><g fill="none" stroke="#9a9a9a" stroke-width="1.100"><ellipse cx="7" cy="3.300" rx="6.300" ry="2.600"></ellipse><path d="M.7 3.300v10.200c0 1.300 1.800 2.200 4.300 2.500M13.300 3.300v3M.7 6.700c0 1.300 1.800 2.200 4.300 2.500M.7 10.100c0 1.300 1.800 2.200 4.300 2.500"></path></g><rect x="5.500" y="6.800" width="12.800" height="11.700" rx="1.800" fill="#2f8fe6"></rect><text x="11.900" y="12" font-size="5" font-weight="bold" fill="#fff" text-anchor="middle" font-family="Liberation Sans,sans-serif">101</text><text x="11.900" y="17" font-size="5" font-weight="bold" fill="#fff" text-anchor="middle" font-family="Liberation Sans,sans-serif">ABC</text></svg>
<svg style="left:502.0px;top:37.5px" width="19" height="19" viewBox="0 0 19 19"><g fill="#fff" stroke="#3a96e8" stroke-width="1.100"><rect x=".6" y="6.500" width="3.600" height="8.500" rx="1.600"></rect><rect x="5.200" y=".8" width="3.600" height="13" rx="1.600"></rect><rect x="9.800" y="7.500" width="3.600" height="10.500" rx="1.600"></rect><rect x="14.400" y="3.500" width="3.600" height="11" rx="1.600"></rect></g></svg>
<div class="abs" style="left:0;top:61px;width:1371px;height:775px;background:#fff"></div>
<div class="abs" style="left:11.300px;top:61px;width:1360px;height:22px;background:linear-gradient(#d6e8f8,#dcebf9);"></div>
<div class="abs" style="left:11.3px;top:61px;width:241.5px;height:22px;overflow:hidden"><div class="t" style="left:2.300px;top:.5px;font-size:14.300px;color:#1a1a1a"><span style="letter-spacing: -0.66px;">ZCRYPTOITERATIONCOUNT</span></div></div>
<div class="abs" style="left:253.3px;top:61px;width:269.5px;height:22px;overflow:hidden"><div class="t" style="left:2.300px;top:.5px;font-size:14.300px;color:#1a1a1a"><span style="letter-spacing: -0.91px;">ZISPASSWORDPROTECTED</span></div></div>
<div class="abs" style="left:523.3px;top:61px;width:169.1px;height:22px;overflow:hidden"><div class="t" style="left:2.300px;top:.5px;font-size:14.300px;color:#1a1a1a"><span style="letter-spacing: -0.67px;">ZMARKEDFORDELETION</span></div></div>
<div class="abs" style="left:692.9px;top:61px;width:169.1px;height:22px;overflow:hidden"><div class="t" style="left:2.300px;top:.5px;font-size:14.300px;color:#1a1a1a"><span style="letter-spacing: -0.28px;">ZMINIMUMSUPPORTEDN</span>OTESVERSION</div></div>
<div class="abs" style="left:862.5px;top:61px;width:169.1px;height:22px;overflow:hidden"><div class="t" style="left:2.300px;top:.5px;font-size:14.300px;color:#1a1a1a"><span style="letter-spacing: -0.73px;">ZNEEDSINITIALFETCHFR</span>OMCLOUD</div></div>
<div class="abs" style="left:1032.1px;top:61px;width:169.1px;height:22px;overflow:hidden"><div class="t" style="left:2.300px;top:.5px;font-size:14.300px;color:#1a1a1a"><span style="letter-spacing: -1.12px;">ZNEEDSTOBEFETCHEDFR</span>OMCLOUD</div></div>
<div class="abs" style="left:1201.7px;top:61px;width:169.1px;height:22px;overflow:hidden"><div class="t" style="left:2.300px;top:.5px;font-size:14.300px;color:#1a1a1a"><span style="letter-spacing: -1.13px;">ZNEEDSTOSAVEUSERSPE</span>CIFICRECORD</div></div>
<div class="abs" style="left:11.300px;top:82.60px;width:1360px;height:22.50px;background:#fff;border-bottom:1px solid #f4f4f4"></div>
<div class="abs" style="left:0;top:82.60px;width:11.300px;height:22.50px;background:#fff;border-bottom:1px solid #f0f0f0;border-right:1px solid #e9e9e9"></div>
<div class="t gc" style="left:11.3px;top:83.80px;width:239.7px;color:#1a1a1a">0</div>
<div class="t gc" style="left:253.3px;top:83.80px;width:267.7px;color:#1a1a1a">0</div>
<div class="t gc" style="left:523.3px;top:83.80px;width:167.3px;color:#1a1a1a">0</div>
<div class="t gc" style="left:692.9px;top:83.80px;width:167.3px;color:#1a1a1a">0</div>
<div class="t gc" style="left:862.5px;top:83.80px;width:167.3px;color:#1a1a1a">0</div>
<div class="t gc" style="left:1032.1px;top:83.80px;width:167.3px;color:#c9c9c9">(Null)</div>
<div class="t gc" style="left:1201.7px;top:83.80px;width:167.3px;color:#1a1a1a">1</div>
<div class="abs" style="left:11.300px;top:105.10px;width:1360px;height:22.50px;background:#fff;border-bottom:1px solid #f4f4f4"></div>
<div class="abs" style="left:0;top:105.10px;width:11.300px;height:22.50px;background:#fff;border-bottom:1px solid #f0f0f0;border-right:1px solid #e9e9e9"></div>
<div class="t gc" style="left:11.3px;top:106.30px;width:239.7px;color:#1a1a1a">0</div>
<div class="t gc" style="left:253.3px;top:106.30px;width:267.7px;color:#1a1a1a">0</div>
<div class="t gc" style="left:523.3px;top:106.30px;width:167.3px;color:#1a1a1a">0</div>
<div class="t gc" style="left:692.9px;top:106.30px;width:167.3px;color:#1a1a1a">0</div>
<div class="t gc" style="left:862.5px;top:106.30px;width:167.3px;color:#1a1a1a">0</div>
<div class="t gc" style="left:1032.1px;top:106.30px;width:167.3px;color:#c9c9c9">(Null)</div>
<div class="t gc" style="left:1201.7px;top:106.30px;width:167.3px;color:#1a1a1a">1</div>
<div class="abs" style="left:11.300px;top:127.60px;width:1360px;height:22.50px;background:#f7f7f7;border-bottom:1px solid #f4f4f4"></div>
<div class="abs" style="left:0;top:127.60px;width:11.300px;height:22.50px;background:#fff;border-bottom:1px solid #f0f0f0;border-right:1px solid #e9e9e9"></div>
<div class="t gc" style="left:11.3px;top:128.80px;width:239.7px;color:#1a1a1a">20000</div>
<div class="t gc" style="left:253.3px;top:128.80px;width:267.7px;color:#1a1a1a">0</div>
<div class="t gc" style="left:523.3px;top:128.80px;width:167.3px;color:#1a1a1a">0</div>
<div class="t gc" style="left:692.9px;top:128.80px;width:167.3px;color:#1a1a1a">0</div>
<div class="t gc" style="left:862.5px;top:128.80px;width:167.3px;color:#1a1a1a">0</div>
<div class="t gc" style="left:1032.1px;top:128.80px;width:167.3px;color:#c9c9c9">(Null)</div>
<div class="t gc" style="left:1201.7px;top:128.80px;width:167.3px;color:#c9c9c9">(Null)</div>
<div class="abs" style="left:11.300px;top:150.10px;width:1360px;height:22.50px;background:#fff;border-bottom:1px solid #f4f4f4"></div>
<div class="abs" style="left:0;top:150.10px;width:11.300px;height:22.50px;background:#fff;border-bottom:1px solid #f0f0f0;border-right:1px solid #e9e9e9"></div>
<div class="t gc" style="left:11.3px;top:151.30px;width:239.7px;color:#1a1a1a">0</div>
<div class="t gc" style="left:253.3px;top:151.30px;width:267.7px;color:#1a1a1a">0</div>
<div class="t gc" style="left:523.3px;top:151.30px;width:167.3px;color:#1a1a1a">0</div>
<div class="t gc" style="left:692.9px;top:151.30px;width:167.3px;color:#1a1a1a">0</div>
<div class="t gc" style="left:862.5px;top:151.30px;width:167.3px;color:#1a1a1a">0</div>
<div class="t gc" style="left:1032.1px;top:151.30px;width:167.3px;color:#c9c9c9">(Null)</div>
<div class="t gc" style="left:1201.7px;top:151.30px;width:167.3px;color:#c9c9c9">(Null)</div>
<div class="abs" style="left:11.300px;top:172.60px;width:1360px;height:22.50px;background:#0078d7;border-bottom:1px solid #4da3e6"></div>
<div class="abs" style="left:0;top:172.60px;width:11.300px;height:22.50px;background:#d5e7f8;border-bottom:1px solid #f0f0f0;border-right:1px solid #e9e9e9"></div>
<div class="t gc" style="left:11.3px;top:173.80px;width:239.7px;color:#fff">20000</div>
<div class="t gc" style="left:253.3px;top:173.80px;width:267.7px;color:#fff">1</div>
<div class="t gc" style="left:523.3px;top:173.80px;width:167.3px;color:#fff">0</div>
<div class="t gc" style="left:692.9px;top:173.80px;width:167.3px;color:#fff">0</div>
<div class="t gc" style="left:862.5px;top:173.80px;width:167.3px;color:#fff">0</div>
<div class="t gc" style="left:1032.1px;top:173.80px;width:167.3px;color:#a3cdf0">(Null)</div>
<div class="t gc" style="left:1201.7px;top:173.80px;width:167.3px;color:#a3cdf0">(Null)</div>
<div class="abs" style="left:253.3px;top:172.60px;width:1px;height:21.50px;background:#66b0ea"></div>
<div class="abs" style="left:523.3px;top:172.60px;width:1px;height:21.50px;background:#66b0ea"></div>
<div class="abs" style="left:692.9px;top:172.60px;width:1px;height:21.50px;background:#66b0ea"></div>
<div class="abs" style="left:862.5px;top:172.60px;width:1px;height:21.50px;background:#66b0ea"></div>
<div class="abs" style="left:1032.1px;top:172.60px;width:1px;height:21.50px;background:#66b0ea"></div>
<div class="abs" style="left:1201.7px;top:172.60px;width:1px;height:21.50px;background:#66b0ea"></div>
<div class="abs" style="left:11.300px;top:195.10px;width:1360px;height:22.50px;background:#0078d7;border-bottom:1px solid #4da3e6"></div>
<div class="abs" style="left:0;top:195.10px;width:11.300px;height:22.50px;background:#d5e7f8;border-bottom:1px solid #f0f0f0;border-right:1px solid #e9e9e9"></div>
<div class="t gc" style="left:11.3px;top:196.30px;width:239.7px;color:#fff">20000</div>
<div class="t gc" style="left:253.3px;top:196.30px;width:267.7px;color:#fff">1</div>
<div class="t gc" style="left:523.3px;top:196.30px;width:167.3px;color:#fff">0</div>
<div class="t gc" style="left:692.9px;top:196.30px;width:167.3px;color:#fff">0</div>
<div class="t gc" style="left:862.5px;top:196.30px;width:167.3px;color:#fff">0</div>
<div class="t gc" style="left:1032.1px;top:196.30px;width:167.3px;color:#a3cdf0">(Null)</div>
<div class="t gc" style="left:1201.7px;top:196.30px;width:167.3px;color:#a3cdf0">(Null)</div>
<div class="abs" style="left:253.3px;top:195.10px;width:1px;height:21.50px;background:#66b0ea"></div>
<div class="abs" style="left:523.3px;top:195.10px;width:1px;height:21.50px;background:#66b0ea"></div>
<div class="abs" style="left:692.9px;top:195.10px;width:1px;height:21.50px;background:#66b0ea"></div>
<div class="abs" style="left:862.5px;top:195.10px;width:1px;height:21.50px;background:#66b0ea"></div>
<div class="abs" style="left:1032.1px;top:195.10px;width:1px;height:21.50px;background:#66b0ea"></div>
<div class="abs" style="left:1201.7px;top:195.10px;width:1px;height:21.50px;background:#66b0ea"></div>
<div class="abs" style="left:11.300px;top:217.60px;width:1360px;height:22.50px;background:#fff;border-bottom:1px solid #f4f4f4"></div>
<div class="abs" style="left:0;top:217.60px;width:11.300px;height:22.50px;background:#fff;border-bottom:1px solid #f0f0f0;border-right:1px solid #e9e9e9"></div>
<div class="t gc" style="left:11.3px;top:218.80px;width:239.7px;color:#1a1a1a">0</div>
<div class="t gc" style="left:253.3px;top:218.80px;width:267.7px;color:#1a1a1a">0</div>
<div class="t gc" style="left:523.3px;top:218.80px;width:167.3px;color:#1a1a1a">0</div>
<div class="t gc" style="left:692.9px;top:218.80px;width:167.3px;color:#1a1a1a">0</div>
<div class="t gc" style="left:862.5px;top:218.80px;width:167.3px;color:#1a1a1a">0</div>
<div class="t gc" style="left:1032.1px;top:218.80px;width:167.3px;color:#c9c9c9">(Null)</div>
<div class="t gc" style="left:1201.7px;top:218.80px;width:167.3px;color:#c9c9c9">(Null)</div>
<div class="abs" style="left:11.300px;top:240.10px;width:1360px;height:22.50px;background:#fff;border-bottom:1px solid #f4f4f4"></div>
<div class="abs" style="left:0;top:240.10px;width:11.300px;height:22.50px;background:#fff;border-bottom:1px solid #f0f0f0;border-right:1px solid #e9e9e9"></div>
<div class="t gc" style="left:11.3px;top:241.30px;width:239.7px;color:#1a1a1a">0</div>
<div class="t gc" style="left:253.3px;top:241.30px;width:267.7px;color:#1a1a1a">0</div>
<div class="t gc" style="left:523.3px;top:241.30px;width:167.3px;color:#1a1a1a">0</div>
<div class="t gc" style="left:692.9px;top:241.30px;width:167.3px;color:#1a1a1a">0</div>
<div class="t gc" style="left:862.5px;top:241.30px;width:167.3px;color:#1a1a1a">0</div>
<div class="t gc" style="left:1032.1px;top:241.30px;width:167.3px;color:#c9c9c9">(Null)</div>
<div class="t gc" style="left:1201.7px;top:241.30px;width:167.3px;color:#1a1a1a">1</div>
<div class="abs" style="left:11.300px;top:262.60px;width:1360px;height:22.50px;background:#f7f7f7;border-bottom:1px solid #f4f4f4"></div>
<div class="abs" style="left:0;top:262.60px;width:11.300px;height:22.50px;background:#fff;border-bottom:1px solid #f0f0f0;border-right:1px solid #e9e9e9"></div>
<div class="t gc" style="left:11.3px;top:263.80px;width:239.7px;color:#1a1a1a">0</div>
<div class="t gc" style="left:253.3px;top:263.80px;width:267.7px;color:#1a1a1a">0</div>
<div class="t gc" style="left:523.3px;top:263.80px;width:167.3px;color:#1a1a1a">0</div>
<div class="t gc" style="left:692.9px;top:263.80px;width:167.3px;color:#1a1a1a">0</div>
<div class="t gc" style="left:862.5px;top:263.80px;width:167.3px;color:#1a1a1a">0</div>
<div class="t gc" style="left:1032.1px;top:263.80px;width:167.3px;color:#c9c9c9">(Null)</div>
<div class="t gc" style="left:1201.7px;top:263.80px;width:167.3px;color:#1a1a1a">1</div>
<div class="abs" style="left:11.300px;top:285.10px;width:1360px;height:22.50px;background:#fff;border-bottom:1px solid #f4f4f4"></div>
<div class="abs" style="left:0;top:285.10px;width:11.300px;height:22.50px;background:#fff;border-bottom:1px solid #f0f0f0;border-right:1px solid #e9e9e9"></div>
<div class="t gc" style="left:11.3px;top:286.30px;width:239.7px;color:#1a1a1a">0</div>
<div class="t gc" style="left:253.3px;top:286.30px;width:267.7px;color:#1a1a1a">0</div>
<div class="t gc" style="left:523.3px;top:286.30px;width:167.3px;color:#1a1a1a">0</div>
<div class="t gc" style="left:692.9px;top:286.30px;width:167.3px;color:#1a1a1a">0</div>
<div class="t gc" style="left:862.5px;top:286.30px;width:167.3px;color:#1a1a1a">0</div>
<div class="t gc" style="left:1032.1px;top:286.30px;width:167.3px;color:#1a1a1a">1</div>
<div class="t gc" style="left:1201.7px;top:286.30px;width:167.3px;color:#c9c9c9">(Null)</div>
<div class="abs" style="left:11.300px;top:307.60px;width:1360px;height:22.50px;background:#fff;border-bottom:1px solid #f4f4f4"></div>
<div class="abs" style="left:0;top:307.60px;width:11.300px;height:22.50px;background:#fff;border-bottom:1px solid #f0f0f0;border-right:1px solid #e9e9e9"></div>
<div class="t gc" style="left:11.3px;top:308.80px;width:239.7px;color:#1a1a1a">0</div>
<div class="t gc" style="left:253.3px;top:308.80px;width:267.7px;color:#1a1a1a">0</div>
<div class="t gc" style="left:523.3px;top:308.80px;width:167.3px;color:#1a1a1a">0</div>
<div class="t gc" style="left:692.9px;top:308.80px;width:167.3px;color:#1a1a1a">0</div>
<div class="t gc" style="left:862.5px;top:308.80px;width:167.3px;color:#1a1a1a">0</div>
<div class="t gc" style="left:1032.1px;top:308.80px;width:167.3px;color:#c9c9c9">(Null)</div>
<div class="t gc" style="left:1201.7px;top:308.80px;width:167.3px;color:#c9c9c9">(Null)</div>
<div class="abs" style="left:3.500px;top:181.500px;width:4.500px;height:4.500px;border-radius:50%;background:#111"></div>
<svg style="left:2px;top:200.500px" width="9" height="11" viewBox="0 0 9 11"><path d="M1 .8l6 4.700-6 4.700M1 3.500l2.500 2-2.500 2" fill="none" stroke="#111" stroke-width="1.500"></path></svg>
<div class="abs" style="left:1376.300px;top:256.700px;width:8px;height:385.500px;background:#868688"></div>
<div class="abs" style="left:39px;top:841.600px;width:60px;height:8px;background:#8a888b"></div>
<svg style="left:0;top:855.500px" width="1391" height="24" viewBox="414 978 1391 24"><g fill="none" stroke="#444" stroke-width="1.800"><path d="M418.500 989.500h11M424 984v11"></path><path d="M440.500 989.500h11"></path></g><path d="M462.500 990l3.500 3.500 7-8" fill="none" stroke="#c6c6c8" stroke-width="2.400"></path><path d="M484.500 984.500l9.500 10M494 984.500l-9.500 10" fill="none" stroke="#c6c6c8" stroke-width="2.300"></path><path d="M515.500 987.500a4.700 4.700 0 1 0 .7 4" fill="none" stroke="#444" stroke-width="1.900"></path><path d="M517.500 984v4.500H513z" fill="#444"></path><rect x="527.500" y="984" width="11.500" height="11.500" fill="#c4c4c4"></rect><g fill="#444" stroke="#444" stroke-width="2"><path d="M1589 984.500v10" fill="none"></path><path d="M1601.500 989.500h-6" fill="none"></path><path d="M1591.500 989.500l5-4.200v8.400z" stroke-width=".6"></path><path d="M1628 989.500h-7" fill="none"></path><path d="M1615.500 989.500l5.500-4.500v9z" stroke-width=".6"></path><path d="M1667 989.500h7" fill="none"></path><path d="M1679.500 989.500l-5.500-4.500v9z" stroke-width=".6"></path><path d="M1705.500 984.500v10" fill="none"></path><path d="M1693 989.500h6" fill="none"></path><path d="M1703 989.500l-5-4.200v8.400z" stroke-width=".6"></path></g><rect x="1633" y="981.500" width="26.500" height="20.500" fill="#fff"></rect><g transform="translate(1725.500 989.500)"><circle r="4.200" fill="none" stroke="#555" stroke-width="2.300"></circle><g stroke="#555" stroke-width="2.200"><path d="M0-7V-5M0 7V5M-7 0H-5M7 0H5M-5-5L-3.600-3.600M5 5L3.600 3.600M-5 5L-3.600 3.600M5-5L3.600-3.600"></path></g></g><path d="M1744.500 981v18" stroke="#dcdcdc" stroke-width="1"></path><rect x="1751.500" y="978.500" width="26" height="23" fill="#cfe5f8" stroke="#b9d8f3" stroke-width="1"></rect><g fill="none" stroke="#4a6d8c" stroke-width="1.100"><rect x="1757.500" y="982.500" width="15" height="15"></rect><path d="M1757.500 986.500h15M1757.500 990.200h15M1757.500 993.900h15M1762.500 982.500v15M1767.500 982.500v15"></path></g><g fill="none" stroke="#666" stroke-width="1.100"><rect x="1783.500" y="982.500" width="15" height="15"></rect><path d="M1783.500 985.500h15"></path><rect x="1786" y="988" width="10" height="2.500"></rect><rect x="1786" y="992.500" width="10" height="2.500"></rect></g></svg>
<div class="t" style="left:1228.500px;top:859px;font-size:14.500px;color:#1a1a1a">1</div>
</div>
<div class="abs" style="left:1806px;top:123px;width:1px;height:879px;background:#f6f6f7"></div>
<div id="right" class="abs">
<svg style="left:0;top:0" width="114" height="70" viewBox="1806 123 114 70"><circle cx="1836.300" cy="137.600" r="7.300" fill="none" stroke="#444" stroke-width="1.300"></circle><path d="M1836.300 136.500v5" stroke="#444" stroke-width="1.600"></path><circle cx="1836.300" cy="133.800" r="1" fill="#444"></circle><rect x="1857" y="131" width="14.500" height="13.500" rx="1" fill="none" stroke="#555" stroke-width="1.200"></rect><text x="1864.200" y="139.800" font-size="5.500" font-weight="bold" fill="#555" text-anchor="middle" font-family="Liberation Sans,sans-serif">DDL</text><rect x="1882.500" y="128.600" width="18" height="17.500" rx="1.500" fill="#2d8cf0"></rect><path d="M1891.500 128.600v17.500" stroke="#fff" stroke-width="1.600"></path><g fill="#fff"><rect x="1885" y="131.500" width="4.200" height="3.200"></rect><rect x="1885" y="136.500" width="4.200" height="3.200"></rect><rect x="1885" y="141.300" width="4.200" height="2.500"></rect><rect x="1893.800" y="131.500" width="4.200" height="3.200"></rect><rect x="1893.800" y="136.500" width="4.200" height="3.200"></rect><rect x="1893.800" y="141.300" width="4.200" height="2.500"></rect></g><defs><linearGradient id="gCol" x1="0" y1="0" x2="0" y2="1"><stop offset="0" stop-color="#f1f1f1"></stop><stop offset="1" stop-color="#cfcfcf"></stop></linearGradient><linearGradient id="gColB" x1="0" y1="0" x2="0" y2="1"><stop offset="0" stop-color="#a8d2fb"></stop><stop offset="1" stop-color="#3f98ee"></stop></linearGradient></defs><rect x="1825.200" y="165.500" width="18.300" height="17.500" rx="1" fill="url(#gCol)"></rect><rect x="1831.500" y="165.500" width="5.600" height="17.500" fill="url(#gColB)"></rect></svg>
<div class="abs" style="left:0;top:40px;width:105px;height:24px;overflow:hidden">
<div class="t" style="left:46.500px;top:1px;font-size:14.500px;font-weight:bold;color:#444"><span style="letter-spacing: -0.42px;">ZISPASS</span>WORDPROTECTED</div></div>
<div class="t" style="left:18.5px;top:75.0px;font-size:15.5px;color:#7d7d7d;">类型</div>
<div class="t" style="left: 18.5px; top: 96px; font-size: 13.8px; color: rgb(68, 68, 68); letter-spacing: -0.69px;">INTEGER</div>
<div class="t" style="left: 18.5px; top: 127px; font-size: 15.5px; color: rgb(125, 125, 125); letter-spacing: 0.72px;">不是 null</div>
<div class="t" style="left:18.5px;top:148.0px;font-size:13.33px;color:#444;">否</div>
<div class="t" style="left:18.5px;top:179.0px;font-size:15.5px;color:#7d7d7d;">默认值</div>
<div class="t" style="left: 20px; top: 200px; font-size: 13.8px; color: rgb(102, 102, 102); letter-spacing: 0.65px;">--</div>
<div class="t" style="left:18.5px;top:230.5px;font-size:15.5px;color:#7d7d7d;">注释</div>
<div class="t" style="left: 22px; top: 252px; font-size: 13.8px; color: rgb(102, 102, 102); letter-spacing: 0.65px;">--</div>
</div>
<div id="status" class="abs">
  <div class="abs" style="left:410px;top:0;width:1px;height:24px;background:#ebebec"></div>
  <div class="abs" style="left:1587px;top:0;width:1px;height:24px;background:#e2e2e2"></div>
  <div class="abs" style="left:1510px;top:0;width:1px;height:24px;background:#e9e9ea"></div>
  <div class="t" style="left: 418px; top: 1.5px; font-size: 13.8px; color: rgb(26, 26, 26); letter-spacing: 0.19px;"><span class="c">已选择</span> 2 <span class="c">行</span></div>
  <div class="t" style="left: 1590.5px; top: 2px; font-size: 14.3px; color: rgb(26, 26, 26); letter-spacing: 0.18px;"><span class="c">第</span> 6 <span class="c">条记录</span>&nbsp; (<span class="c">共</span> 11 <span class="c">条</span>)&nbsp; <span class="c">于第</span> 1 <span class="c">页</span></div>
  <div class="abs" style="left:1863.500px;top:0.500px;width:51px;height:22.500px;background:#cfe5f8;border:1px solid #bcdaf4"></div>
  <div class="abs" style="left:1888.500px;top:0.500px;width:1px;height:22.500px;background:#bcdaf4"></div>
  <svg style="left:1870px;top:5.500px" width="40" height="13" viewBox="0 0 40 13"><g fill="none" stroke="#555" stroke-width="1.300"><rect x=".7" y=".7" width="12.500" height="11.600"></rect><rect x="26.200" y=".7" width="12.500" height="11.600"></rect></g><rect x=".7" y=".7" width="4.300" height="11.600" fill="#555"></rect><rect x="34.400" y=".7" width="4.300" height="11.600" fill="#555"></rect></svg>
</div>
<div id="taskbar" class="abs">
  <div class="abs" style="left:0;top:-1px;width:1920px;height:2px;background:linear-gradient(#eceef2,#dfe5ee)"></div>
  <!-- weather -->
  <svg style="left:21px;top:11px" width="31" height="30" viewBox="0 0 31 30">
    <defs><linearGradient id="gMoon" x1="0" y1="0" x2="1" y2="1"><stop offset="0" stop-color="#ffc93a"></stop><stop offset="1" stop-color="#f7931e"></stop></linearGradient>
    <linearGradient id="gCloud" x1="0" y1="0" x2="0" y2="1"><stop offset="0" stop-color="#a9c6f2"></stop><stop offset=".6" stop-color="#cfe3fb"></stop><stop offset="1" stop-color="#9fc1ee"></stop></linearGradient></defs>
    <path d="M12.500 2c4.500 3 5.500 8.500 2.500 13.500-3.500 1-8.500-.5-12.500-5C7.500 11.500 12 8 12.500 2z" fill="url(#gMoon)"></path>
    <path d="M7 28.500a5.500 5.500 0 0 1-.5-11 7 7 0 0 1 12.500-3.500 5.500 5.500 0 0 1 6 4.500 5 5 0 0 1-1 10z" fill="url(#gCloud)"></path>
  </svg>
  <div class="t" style="left: 58px; top: 8px; font-size: 14.5px; color: rgb(34, 34, 34); letter-spacing: -1.28px;">5°C</div>
  <div class="t" style="left:58px;top:27.300px;font-size:13.330px;color:#555">多云</div>
  <!-- start -->
  <svg style="left:665px;top:14px" width="27" height="27" viewBox="0 0 27 27"><defs><linearGradient id="gWin" x1="0" y1="0" x2="1" y2="1"><stop offset="0" stop-color="#55c8f7"></stop><stop offset="1" stop-color="#0a74d3"></stop></linearGradient></defs><path d="M0 1.500A1.500 1.500 0 0 1 1.500 0H12.500V12.500H0zM14 0H24.800a1.500 1.500 0 0 1 1.500 1.500V12.500H14zM0 14H12.500V26.300H1.500A1.500 1.500 0 0 1 0 24.800zM14 14H26.300V24.800a1.500 1.500 0 0 1-1.500 1.500H14z" fill="url(#gWin)"></path></svg>
  <!-- search pill -->
  <div class="abs" style="left:709px;top:9.500px;width:108px;height:34px;border-radius:17px;background:#f4f7fc;border:1px solid #e6ebf3"></div>
  <svg style="left:739px;top:19px" width="17" height="16" viewBox="0 0 17 16"><circle cx="10" cy="6.200" r="5" fill="none" stroke="#222" stroke-width="1.700"></circle><path d="M6.500 10L1.200 15.200" stroke="#222" stroke-width="1.900" stroke-linecap="round"></path></svg>
  <div class="t" style="left:761.500px;top:17px;font-size:13.330px;color:#333">搜索</div>
  <!-- task view -->
  <svg style="left:834px;top:14px" width="27" height="26" viewBox="0 0 27 26"><rect x="7.300" y=".5" width="18.700" height="17.300" rx="1.500" fill="#f4f4f6"></rect><rect x=".2" y="7.400" width="19.800" height="17.600" rx="1.500" fill="#26262a"></rect><rect x="7.300" y="7.400" width="12.700" height="10.400" fill="#c9c9cc"></rect></svg>
  <!-- wechat -->
  <svg style="left:880px;top:13px" width="32" height="28" viewBox="0 0 32 28"><path d="M12 2C6.500 2 2 5.800 2 10.500c0 2.700 1.500 5 3.800 6.600L5 20.500l3.800-2c1 .3 2.100.5 3.200.5 5.500 0 10-3.800 10-8.500S17.500 2 12 2z" fill="#2dc160"></path><circle cx="8.700" cy="8.500" r="1.200" fill="#167a3a"></circle><circle cx="15.200" cy="8.500" r="1.200" fill="#167a3a"></circle><path d="M23 11.500c-4.200 0-7.600 2.900-7.600 6.400s3.400 6.400 7.600 6.400c.9 0 1.700-.1 2.500-.4l2.800 1.500-.6-2.600c1.800-1.200 2.900-3 2.900-4.900 0-3.500-3.400-6.400-7.600-6.400z" fill="#f0f0f0"></path><circle cx="20.500" cy="16.500" r=".9" fill="#888"></circle><circle cx="25.500" cy="16.500" r=".9" fill="#888"></circle></svg>
  <!-- bag -->
  <svg style="left:934px;top:14px" width="25" height="25" viewBox="0 0 25 25"><path d="M2.500 1h20l1.800 21a2 2 0 0 1-2 2.200H2.700a2 2 0 0 1-2-2.200z" fill="#1fc77e"></path><path d="M6.800 8a5.700 5.700 0 0 0 11.400 0" fill="none" stroke="#fff" stroke-width="2" stroke-linecap="round"></path></svg>
  <!-- folder -->
  <svg style="left:981px;top:14px" width="28" height="26" viewBox="0 0 28 26"><path d="M1 2.500A1.500 1.500 0 0 1 2.500 1h7l2.500 3h14.500A1.500 1.500 0 0 1 28 5.500V8H1z" fill="#e8a317"></path><rect x="1" y="5" width="27" height="20" rx="1.500" fill="#ffcf48"></rect><path d="M5 17.500A2.500 2.500 0 0 1 7.500 15h14a2.500 2.500 0 0 1 2.500 2.500V25H5z" fill="#1e7fd8"></path><rect x="10.500" y="19" width="8" height="2" rx="1" fill="#0f5ca8"></rect></svg>
  <!-- chrome -->
  <svg style="left:1031px;top:12px" width="28" height="28" viewBox="-14 -14 28 28"><circle r="13.600" fill="#fbbc05"></circle><path d="M0 0L-11.780 -6.800A13.600 13.600 0 0 1 11.780 -6.800z" fill="#ea4335"></path><path d="M-11.780 -6.800A13.600 13.600 0 0 0 0 13.600L5.900 3.400 -5.900 3.400z" fill="#34a853"></path><path d="M-11.780 -6.800L-5.900 3.400 0 0z" fill="#34a853"></path><path d="M11.780 -6.800H0v6.800l5.900 3.400L0 13.600A13.600 13.600 0 0 0 11.780 -6.800z" fill="#fbbc05"></path><path d="M-11.780 -6.800A13.600 13.600 0 0 1 11.780 -6.800H0A6.800 6.800 0 0 0 -5.900 -3.400z" fill="#ea4335"></path><circle r="6.500" fill="#fff"></circle><circle r="5.100" fill="#4285f4"></circle></svg>
  <!-- edge -->
  <svg style="left:1081px;top:12.700px" width="28" height="28" viewBox="-14 -14 28 28"><defs><linearGradient id="gEd" x1="0" y1="0" x2=".6" y2="1"><stop offset="0" stop-color="#2aa5e2"></stop><stop offset="1" stop-color="#0f62b4"></stop></linearGradient><linearGradient id="gEd2" x1="0" y1="0" x2="1" y2=".3"><stop offset="0" stop-color="#27b4e0"></stop><stop offset=".55" stop-color="#35c9c0"></stop><stop offset="1" stop-color="#63e052"></stop></linearGradient><clipPath id="cpEd"><circle r="13.700"></circle></clipPath></defs>
    <g clip-path="url(#cpEd)"><circle r="13.700" fill="url(#gEd)"></circle>
    <path d="M-6 -2.500C-7.500 3 -4.500 8.500 1.500 10.500C6 11.800 10.500 10.500 13 7L15 14H-8z" fill="#0b4f9c"></path>
    <path d="M-14 -2C-12 -9 -6 -14.500 0 -14.500C8 -14.500 14.500 -9 14.500 -1C14.500 2 13 4.500 10.500 5.500C7 6.500 3.500 5.500 3.800 3C4.500 0 3.500 -3.500 0 -5C-4.500 -6.500 -10 -5 -14 -2Z" fill="url(#gEd2)"></path>
    <path d="M-3 1.200C-3 4 -1 6.500 2.500 7.500C6.500 8.500 10.500 7.500 14 5L14.500 1.500C12 5 8 6.300 4.800 5.300C3.300 4.800 3.300 3.500 3.600 2.500C4 -.5 2.500 -3 0 -3.200C-2 -3.200 -3 -1 -3 1.200Z" fill="#dbe7f2"></path></g>
  </svg>
  <!-- tencent meeting like -->
  <svg style="left:1132px;top:14px" width="25" height="25" viewBox="0 0 25 25"><defs><linearGradient id="gTm" x1="0" y1="0" x2="0" y2="1"><stop offset="0" stop-color="#0d8ef6"></stop><stop offset="1" stop-color="#0b62fd"></stop></linearGradient></defs><rect width="24.800" height="24.900" rx="3.200" fill="url(#gTm)"></rect><path d="M2.300 14.100L8.700 7.300L12.500 11.300L16.400 7.300L22.500 14.100L19.400 17.300L16.400 14.200L12.500 18L8.700 14.200L5.500 17.300Z" fill="#fff"></path><path d="M8.700 7.300L12.500 11.300L9.800 14.500L8.700 14.200Z" fill="#c5dcff"></path></svg>
  <!-- shimo -->
  <svg style="left:1183px;top:15px" width="21" height="22" viewBox="0 0 21 22"><rect width="20.600" height="21" rx="3.500" fill="#fbfbfc"></rect><text x="10.300" y="9.300" font-size="6.500" fill="#555" text-anchor="middle" font-family="Noto Serif CJK SC,Noto Sans CJK SC,serif">石</text><text x="10.300" y="16.800" font-size="6.500" fill="#555" text-anchor="middle" font-family="Noto Serif CJK SC,Noto Sans CJK SC,serif">墨</text></svg>
  <!-- navicat -->
  <svg style="left:1224px;top:7px" width="40" height="40" viewBox="0 0 40 40"><defs><linearGradient id="gNav" x1="0" y1="0" x2="1" y2="1"><stop offset="0" stop-color="#efd257"></stop><stop offset="1" stop-color="#dfb03c"></stop></linearGradient></defs><g fill="none" stroke="url(#gNav)" stroke-width="2.200"><ellipse cx="19.600" cy="23.900" rx="9" ry="7.200"></ellipse><ellipse cx="14.300" cy="14.600" rx="4.100" ry="7.800" transform="rotate(31 14.300 14.600)"></ellipse><ellipse cx="26.200" cy="15.400" rx="3.700" ry="7.100" transform="rotate(-33 26.200 15.400)"></ellipse></g></svg>
  <div class="abs" style="left:1141.500px;top:45px;width:6px;height:3px;border-radius:1.500px;background:#848a94"></div>
  <div class="abs" style="left:1191px;top:45px;width:6px;height:3px;border-radius:1.500px;background:#848a94"></div>
  <div class="abs" style="left:1240.500px;top:45px;width:6px;height:3px;border-radius:1.500px;background:#848a94"></div>
  <!-- tray -->
  <svg style="left:1590px;top:15px" width="100" height="22" viewBox="1590 1042 100 22"><path d="M1592 1056.500l6.400-6.500 6.400 6.500" fill="none" stroke="#222" stroke-width="1.400"></path><path d="M1621 1058.500a4 4 0 0 1-.5-8 5.500 5.500 0 0 1 10.300-1.300 4.700 4.700 0 0 1-.3 9.300z" fill="#a9a9ab" stroke="#333" stroke-width="1.200"></path><rect x="1653.300" y="1044.500" width="6.600" height="11.500" rx="3.300" fill="none" stroke="#2a6fd6" stroke-width="1.500"></rect><path d="M1650.500 1052.500a6.100 6.100 0 0 0 12.200 0M1656.600 1058.600v3.400" fill="none" stroke="#2a6fd6" stroke-width="1.500"></path><rect x="1684.500" y="1048" width="8" height="8" rx="1" fill="none" stroke="#222" stroke-width="1.300"></rect></svg>
  <div class="t" style="left: 1845px; top: 6.5px; font-size: 13.5px; color: rgb(34, 34, 34); letter-spacing: -1.26px;">10:21</div>
  <!-- overlay -->
  <div class="abs" style="left:1687.500px;top:17px;width:233px;height:36px;background:#2a2a2d;border-top-left-radius:6px"></div>
  <div class="abs" style="left:1895px;top:22px;width:25px;height:31px;background:radial-gradient(circle at 70% 60%,#5a5a5c 0,#3a3a3d 60%,#2a2a2d 100%)"></div>
  <svg style="left:1699.500px;top:30.500px" width="13.500" height="14" viewBox="0 0 18 18"><rect x="6" y="1.500" width="5" height="8.500" rx="2.500" fill="#9a9a9c"></rect><path d="M3.800 8a4.700 4.700 0 0 0 9.400 0M8.500 12.700v3M5.500 15.700h6" fill="none" stroke="#9a9a9c" stroke-width="1.200"></path><path d="M1.500 15.500L16.500 1.500" stroke="#e0323a" stroke-width="1.500"></path></svg>
  <div class="abs" style="left:1727px;top:28px;width:1px;height:20px;background:#444"></div>
  <div class="t" style="left: 1739px; top: 28.5px; font-size: 13.33px; color: rgb(242, 242, 242); letter-spacing: -0.04px;">正在讲话: 孙潇潇;</div>
  <div class="t" style="left:1703.600px;top:20.500px;height:26px;line-height:26px;font-size:20.500px;color:rgba(255,255,255,.8)"><span style="letter-spacing: -0.77px;">CSDN</span><span style="font-size: 14px; letter-spacing: 0.45px;"> @</span><span style="font-size: 19.5px; letter-spacing: 0.37px;">五五六六</span><span style="letter-spacing: 0.35px;">0524</span></div>
</div>
</div>


</body></html>
